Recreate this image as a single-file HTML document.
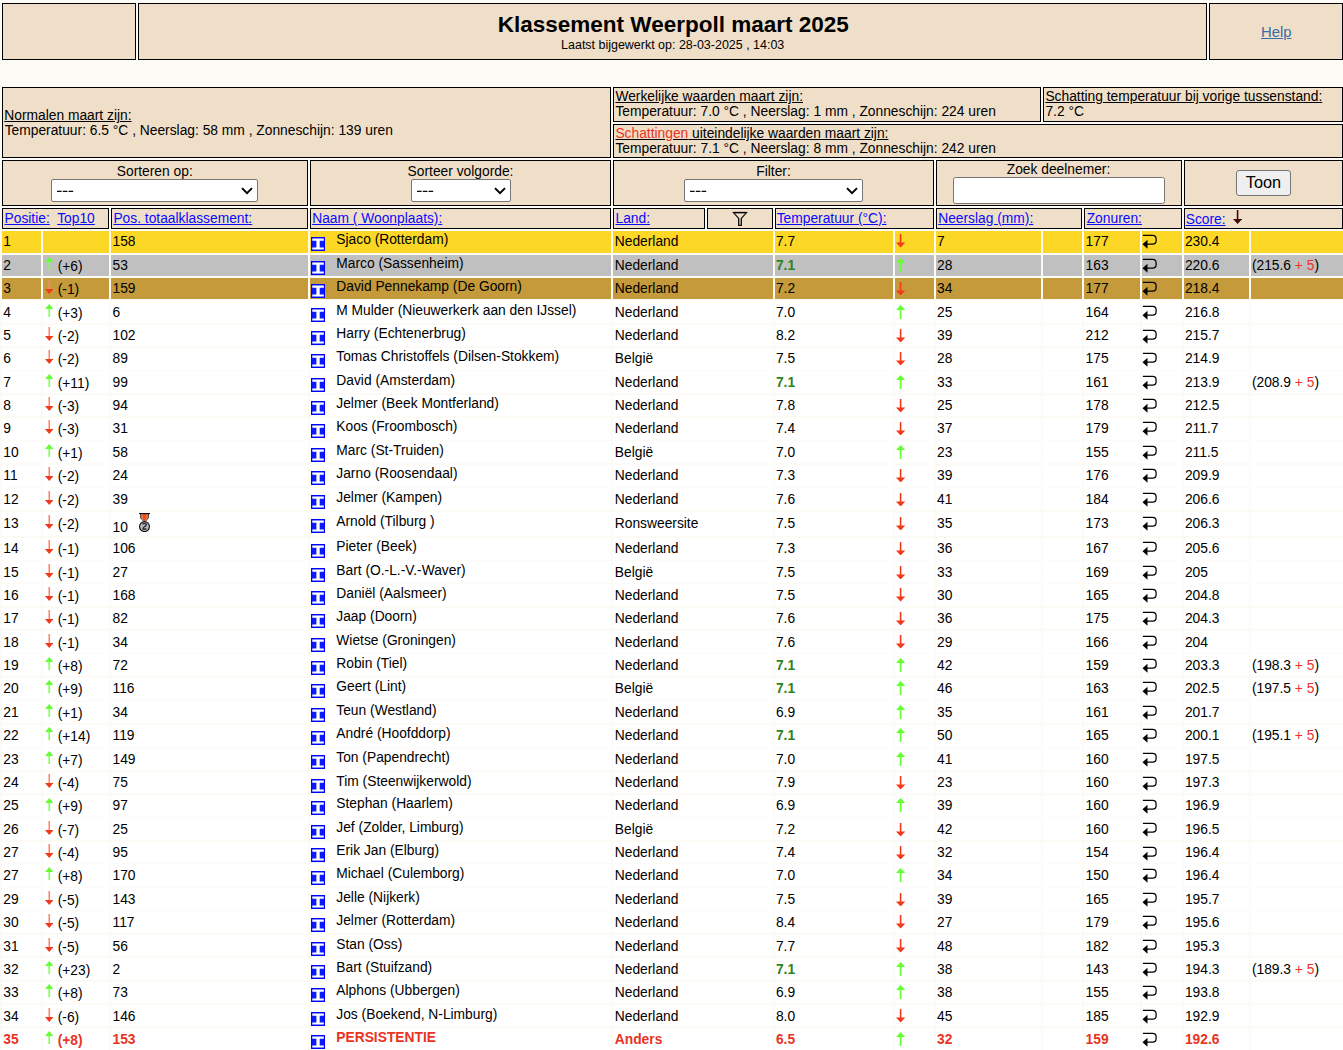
<!DOCTYPE html>
<html><head><meta charset="utf-8"><title>Klassement Weerpoll maart 2025</title>
<style>
html,body{margin:0;padding:0;}
body{width:1343px;height:1050px;overflow:hidden;background:#FDFBF5;font-family:"Liberation Sans",sans-serif;color:#000;position:relative;}
.b{position:absolute;display:block;}
.t{position:absolute;white-space:nowrap;}
.bd{font-weight:bold;}
.rb{font-weight:bold;color:#E8341F;}
.gb{font-weight:bold;color:#2B8420;}
.lk{color:#0A0AFF;text-decoration:underline;}
.sel{position:absolute;box-sizing:border-box;background:#fff;border:1px solid #767676;border-radius:2px;font-size:16.3px;}
.sel span{position:absolute;left:5.5px;top:0.6px;line-height:19px;}
.sel svg.c{position:absolute;right:3.9px;top:6.9px;}
.sel svg.d{position:absolute;left:4.9px;top:9.9px;}
.inp{position:absolute;box-sizing:border-box;background:#fff;border:1px solid #767676;border-radius:2.5px;}
.btn{position:absolute;box-sizing:border-box;background:#EFEFEF;border:1px solid #767676;border-radius:3px;font-size:16.3px;line-height:23px;text-align:center;}
</style></head><body>
<div class="b" style="left:2px;top:3px;width:134.00px;height:57.00px;background:#F0DFC8;border:1px solid #000;box-sizing:border-box;"></div>
<div class="b" style="left:138px;top:3px;width:1069.00px;height:57.00px;background:#F0DFC8;border:1px solid #000;box-sizing:border-box;"></div>
<div class="b" style="left:1209px;top:3px;width:134.00px;height:57.00px;background:#F0DFC8;border:1px solid #000;box-sizing:border-box;"></div>
<div class="t bd" style="left:273.29999999999995px;width:800px;text-align:center;top:11px;font-size:22.5px;line-height:27px;">Klassement Weerpoll maart 2025</div>
<div class="t " style="left:272.70000000000005px;width:800px;text-align:center;top:38px;font-size:12.48px;line-height:15px;">Laatst bijgewerkt op: 28-03-2025 , 14:03</div>
<div class="t " style="left:876.2px;width:800px;text-align:center;top:23px;font-size:14.8px;line-height:18px;"><span style="color:#3A6EA5;text-decoration:underline">Help</span></div>
<div class="b" style="left:2px;top:87px;width:609.20px;height:71.00px;background:#F0DFC8;border:1px solid #000;box-sizing:border-box;"></div>
<div class="b" style="left:613px;top:87px;width:428.00px;height:35.00px;background:#F0DFC8;border:1px solid #000;box-sizing:border-box;"></div>
<div class="b" style="left:1043px;top:87px;width:300.00px;height:35.00px;background:#F0DFC8;border:1px solid #000;box-sizing:border-box;"></div>
<div class="b" style="left:613px;top:124px;width:730.00px;height:34.00px;background:#F0DFC8;border:1px solid #000;box-sizing:border-box;"></div>
<div class="t " style="left:4.3px;top:108px;font-size:13.8px;line-height:16px;"><u>Normalen maart zijn:</u></div>
<div class="t " style="left:4.7px;top:123px;font-size:13.8px;line-height:16px;">Temperatuur: 6.5 °C , Neerslag: 58 mm , Zonneschijn: 139 uren</div>
<div class="t " style="left:615.4px;top:89px;font-size:13.8px;line-height:16px;"><u>Werkelijke waarden maart zijn:</u></div>
<div class="t " style="left:615.4px;top:104px;font-size:13.8px;line-height:16px;">Temperatuur: 7.0 °C , Neerslag: 1 mm , Zonneschijn: 224 uren</div>
<div class="t " style="left:1045.4px;top:89px;font-size:13.8px;line-height:16px;"><u>Schatting temperatuur bij vorige tussenstand:</u></div>
<div class="t " style="left:1045.4px;top:104px;font-size:13.8px;line-height:16px;">7.2 °C</div>
<div class="t " style="left:615.4px;top:126px;font-size:13.8px;line-height:16px;"><u><span style="color:#E8341F">Schattingen</span> uiteindelijke waarden maart zijn:</u></div>
<div class="t " style="left:615.4px;top:141px;font-size:13.8px;line-height:16px;">Temperatuur: 7.1 °C , Neerslag: 8 mm , Zonneschijn: 242 uren</div>
<div class="b" style="left:2px;top:160.1px;width:306.10px;height:45.90px;background:#F0DFC8;border:1px solid #000;box-sizing:border-box;"></div>
<div class="b" style="left:309.7px;top:160.1px;width:301.50px;height:45.90px;background:#F0DFC8;border:1px solid #000;box-sizing:border-box;"></div>
<div class="b" style="left:613px;top:160.1px;width:321.00px;height:45.90px;background:#F0DFC8;border:1px solid #000;box-sizing:border-box;"></div>
<div class="b" style="left:935.7px;top:160.1px;width:246.30px;height:45.90px;background:#F0DFC8;border:1px solid #000;box-sizing:border-box;"></div>
<div class="b" style="left:1184px;top:160.1px;width:159.00px;height:45.90px;background:#F0DFC8;border:1px solid #000;box-sizing:border-box;"></div>
<div class="t " style="left:-245.25px;width:800px;text-align:center;top:164px;font-size:13.8px;line-height:16px;">Sorteren op:</div>
<div class="t " style="left:60.5px;width:800px;text-align:center;top:164px;font-size:13.8px;line-height:16px;">Sorteer volgorde:</div>
<div class="t " style="left:373.5px;width:800px;text-align:center;top:164px;font-size:13.8px;line-height:16px;">Filter:</div>
<div class="t " style="left:658.5px;width:800px;text-align:center;top:162px;font-size:13.8px;line-height:16px;">Zoek deelnemer:</div>
<div class="sel" style="left:51.1px;top:179.1px;width:206.70px;height:22.60px"><svg class="d" width="17" height="3" viewBox="0 0 17 3"><rect x="0" y="0.75" width="4.6" height="1.2"/><rect x="5.8" y="0.75" width="4.6" height="1.2"/><rect x="11.6" y="0.75" width="4.6" height="1.2"/></svg><svg class="c" width="12" height="8" viewBox="0 0 12 8"><path d="M1 1.1 L6 6.1 L11 1.1" fill="none" stroke="#000" stroke-width="2"/></svg></div>
<div class="sel" style="left:411.1px;top:179.1px;width:99.60px;height:22.60px"><svg class="d" width="17" height="3" viewBox="0 0 17 3"><rect x="0" y="0.75" width="4.6" height="1.2"/><rect x="5.8" y="0.75" width="4.6" height="1.2"/><rect x="11.6" y="0.75" width="4.6" height="1.2"/></svg><svg class="c" width="12" height="8" viewBox="0 0 12 8"><path d="M1 1.1 L6 6.1 L11 1.1" fill="none" stroke="#000" stroke-width="2"/></svg></div>
<div class="sel" style="left:684.1px;top:179.1px;width:178.60px;height:22.60px"><svg class="d" width="17" height="3" viewBox="0 0 17 3"><rect x="0" y="0.75" width="4.6" height="1.2"/><rect x="5.8" y="0.75" width="4.6" height="1.2"/><rect x="11.6" y="0.75" width="4.6" height="1.2"/></svg><svg class="c" width="12" height="8" viewBox="0 0 12 8"><path d="M1 1.1 L6 6.1 L11 1.1" fill="none" stroke="#000" stroke-width="2"/></svg></div>
<div class="inp" style="left:953.2px;top:177.1px;width:212px;height:26.6px"></div>
<div class="btn" style="left:1236.2px;top:170.4px;width:54.5px;height:25.2px">Toon</div>
<div class="b" style="left:2px;top:208.0px;width:107.10px;height:21.00px;background:#F0DFC8;border:1px solid #000;box-sizing:border-box;"></div>
<div class="t " style="left:4.5px;top:211px;font-size:13.8px;line-height:16px;"><span class="lk">Positie:</span></div>
<div class="t " style="left:57.2px;top:211px;font-size:13.8px;line-height:16px;"><span class="lk">Top10</span></div>
<div class="b" style="left:110.9px;top:208.0px;width:197.20px;height:21.00px;background:#F0DFC8;border:1px solid #000;box-sizing:border-box;"></div>
<div class="t " style="left:113.4px;top:211px;font-size:13.8px;line-height:16px;"><span class="lk">Pos. totaalklassement:</span></div>
<div class="b" style="left:309.7px;top:208.0px;width:301.50px;height:21.00px;background:#F0DFC8;border:1px solid #000;box-sizing:border-box;"></div>
<div class="t " style="left:312.2px;top:211px;font-size:13.8px;line-height:16px;"><span class="lk">Naam ( Woonplaats):</span></div>
<div class="b" style="left:613px;top:208.0px;width:92.20px;height:21.00px;background:#F0DFC8;border:1px solid #000;box-sizing:border-box;"></div>
<div class="t " style="left:615.5px;top:211px;font-size:13.8px;line-height:16px;"><span class="lk">Land:</span></div>
<div class="b" style="left:707px;top:208.0px;width:66.10px;height:21.00px;background:#F0DFC8;border:1px solid #000;box-sizing:border-box;"></div>
<div class="b" style="left:774.8px;top:208.0px;width:159.20px;height:21.00px;background:#F0DFC8;border:1px solid #000;box-sizing:border-box;"></div>
<div class="t " style="left:776.6999999999999px;top:211px;font-size:13.8px;line-height:16px;"><span class="lk">Temperatuur (°C):</span></div>
<div class="b" style="left:935.7px;top:208.0px;width:146.30px;height:21.00px;background:#F0DFC8;border:1px solid #000;box-sizing:border-box;"></div>
<div class="t " style="left:938.2px;top:211px;font-size:13.8px;line-height:16px;"><span class="lk">Neerslag (mm):</span></div>
<div class="b" style="left:1083.8px;top:208.0px;width:98.20px;height:21.00px;background:#F0DFC8;border:1px solid #000;box-sizing:border-box;"></div>
<div class="t " style="left:1086.7px;top:211px;font-size:13.8px;line-height:16px;"><span class="lk">Zonuren:</span></div>
<div class="b" style="left:1184px;top:208.0px;width:159.00px;height:21.00px;background:#F0DFC8;border:1px solid #000;box-sizing:border-box;"></div>
<div class="t " style="left:1185.7px;top:212px;font-size:13.8px;line-height:16px;"><span class="lk">Score:</span></div>
<svg class="b" style="left:732px;top:211px" width="16" height="16" viewBox="0 0 16 16"><path d="M6.7 7.4 V14.2 H9.3 V7.4 Z" fill="#9a9284" fill-opacity="0.7"/><path d="M1.5 1.6 H14.5 L9.4 7.3 V14.3 H6.6 V7.3 Z" fill="none" stroke="#141414" stroke-width="1.15" stroke-linejoin="miter"/><path d="M1.2 1.5 H14.8" stroke="#000" stroke-width="1.3"/></svg>
<svg class="b" style="left:1233.0px;top:210.10px" width="9.2" height="14" viewBox="0 0 9.2 14" preserveAspectRatio="none"><rect x="3.80" y="0" width="1.6" height="10.00" fill="#420A0A"/><path d="M4.6 14 L9.2 9 L0 9 Z" fill="#420A0A"/></svg>
<div class="b" style="left:2px;top:231.05px;width:39.30px;height:21.65px;background:#FCD726;"></div>
<div class="b" style="left:42.9px;top:231.05px;width:66.30px;height:21.65px;background:#FCD726;"></div>
<div class="b" style="left:110.9px;top:231.05px;width:197.20px;height:21.65px;background:#FCD726;"></div>
<div class="b" style="left:309.7px;top:231.05px;width:301.50px;height:21.65px;background:#FCD726;"></div>
<div class="b" style="left:613px;top:231.05px;width:160.10px;height:21.65px;background:#FCD726;"></div>
<div class="b" style="left:774.8px;top:231.05px;width:118.40px;height:21.65px;background:#FCD726;"></div>
<div class="b" style="left:894.8px;top:231.05px;width:39.30px;height:21.65px;background:#FCD726;"></div>
<div class="b" style="left:935.7px;top:231.05px;width:105.50px;height:21.65px;background:#FCD726;"></div>
<div class="b" style="left:1042.9px;top:231.05px;width:39.10px;height:21.65px;background:#FCD726;"></div>
<div class="b" style="left:1083.8px;top:231.05px;width:56.00px;height:21.65px;background:#FCD726;"></div>
<div class="b" style="left:1141.6px;top:231.05px;width:40.40px;height:21.65px;background:#FCD726;"></div>
<div class="b" style="left:1184px;top:231.05px;width:65.10px;height:21.65px;background:#FCD726;"></div>
<div class="b" style="left:1250.8px;top:231.05px;width:92.20px;height:21.65px;background:#FCD726;"></div>
<div class="t " style="left:3.3px;top:234px;font-size:13.8px;line-height:16px;">1</div>
<div class="t " style="left:112.5px;top:234px;font-size:13.8px;line-height:16px;">158</div>
<svg class="b" style="left:310.9px;top:237.05px" width="14.1" height="14.1" viewBox="0 0 14.1 14.1"><rect width="14.1" height="14.1" fill="#0000FF"/><rect x="1.1" y="1.1" width="11.9" height="11.9" fill="#0A1CFF"/><path d="M1.3 1.5 H12.8 V3.7 H8.7 V10.4 H12.8 V12.6 H1.3 V10.4 H5.4 V3.7 H1.3 Z" fill="#fff"/></svg>
<div class="t " style="left:336.3px;top:232px;font-size:13.8px;line-height:16px;">Sjaco (Rotterdam)</div>
<div class="t " style="left:614.8px;top:234px;font-size:13.8px;line-height:16px;">Nederland</div>
<div class="t " style="left:775.9px;top:234px;font-size:13.8px;line-height:16px;">7.7</div>
<svg class="b" style="left:895.9px;top:234.45px" width="9.2" height="13.5" viewBox="0 0 9.2 13.5" preserveAspectRatio="none"><rect x="3.80" y="0" width="1.6" height="9.50" fill="#F03A1C"/><path d="M4.6 13.5 L9.2 8.5 L0 8.5 Z" fill="#F03A1C"/></svg>
<div class="t " style="left:937.1px;top:234px;font-size:13.8px;line-height:16px;">7</div>
<div class="t " style="left:1085.6px;top:234px;font-size:13.8px;line-height:16px;">177</div>
<svg class="b" style="left:1142.4px;top:234.15px" width="16" height="15" viewBox="0 0 16 15"><path d="M0.9 1.3 H10.6 Q14.1 1.3 14.1 4.7 V6.8 Q14.1 10.2 10.6 10.2 H4.5" fill="none" stroke="#000" stroke-width="1.25"/><path d="M0.5 10.2 L5.5 5.8 V14.7 Z" fill="#000"/></svg>
<div class="t " style="left:1184.9px;top:234px;font-size:13.8px;line-height:16px;">230.4</div>
<div class="b" style="left:2px;top:255.0px;width:39.30px;height:20.65px;background:#C0C0C0;"></div>
<div class="b" style="left:42.9px;top:255.0px;width:66.30px;height:20.65px;background:#C0C0C0;"></div>
<div class="b" style="left:110.9px;top:255.0px;width:197.20px;height:20.65px;background:#C0C0C0;"></div>
<div class="b" style="left:309.7px;top:255.0px;width:301.50px;height:20.65px;background:#C0C0C0;"></div>
<div class="b" style="left:613px;top:255.0px;width:160.10px;height:20.65px;background:#C0C0C0;"></div>
<div class="b" style="left:774.8px;top:255.0px;width:118.40px;height:20.65px;background:#C0C0C0;"></div>
<div class="b" style="left:894.8px;top:255.0px;width:39.30px;height:20.65px;background:#C0C0C0;"></div>
<div class="b" style="left:935.7px;top:255.0px;width:105.50px;height:20.65px;background:#C0C0C0;"></div>
<div class="b" style="left:1042.9px;top:255.0px;width:39.10px;height:20.65px;background:#C0C0C0;"></div>
<div class="b" style="left:1083.8px;top:255.0px;width:56.00px;height:20.65px;background:#C0C0C0;"></div>
<div class="b" style="left:1141.6px;top:255.0px;width:40.40px;height:20.65px;background:#C0C0C0;"></div>
<div class="b" style="left:1184px;top:255.0px;width:65.10px;height:20.65px;background:#C0C0C0;"></div>
<div class="b" style="left:1250.8px;top:255.0px;width:92.20px;height:20.65px;background:#C0C0C0;"></div>
<div class="t " style="left:3.3px;top:258px;font-size:13.8px;line-height:16px;">2</div>
<svg class="b" style="left:44.8px;top:257.15px" width="8.5" height="13.3" viewBox="0 0 8.5 13.3" preserveAspectRatio="none"><rect x="3.40" y="4" width="1.7" height="9.30" fill="#84FF58"/><path d="M4.25 0 L8.5 5 L0 5 Z" fill="#66FF33"/></svg>
<div class="t " style="left:57.7px;top:259px;font-size:13.8px;line-height:16px;">(+6)</div>
<div class="t " style="left:112.5px;top:258px;font-size:13.8px;line-height:16px;">53</div>
<svg class="b" style="left:310.9px;top:261.05px" width="14.1" height="14.1" viewBox="0 0 14.1 14.1"><rect width="14.1" height="14.1" fill="#0000FF"/><rect x="1.1" y="1.1" width="11.9" height="11.9" fill="#0A1CFF"/><path d="M1.3 1.5 H12.8 V3.7 H8.7 V10.4 H12.8 V12.6 H1.3 V10.4 H5.4 V3.7 H1.3 Z" fill="#fff"/></svg>
<div class="t " style="left:336.3px;top:256px;font-size:13.8px;line-height:16px;">Marco (Sassenheim)</div>
<div class="t " style="left:614.8px;top:258px;font-size:13.8px;line-height:16px;">Nederland</div>
<div class="t gb" style="left:775.9px;top:258px;font-size:13.8px;line-height:16px;">7.1</div>
<svg class="b" style="left:895.9px;top:257.95px" width="9.2" height="14.1" viewBox="0 0 9.2 14.1" preserveAspectRatio="none"><rect x="3.75" y="4" width="1.7" height="10.10" fill="#66FF33"/><path d="M4.6 0 L9.2 5 L0 5 Z" fill="#66FF33"/></svg>
<div class="t " style="left:937.1px;top:258px;font-size:13.8px;line-height:16px;">28</div>
<div class="t " style="left:1085.6px;top:258px;font-size:13.8px;line-height:16px;">163</div>
<svg class="b" style="left:1142.4px;top:258.15px" width="16" height="15" viewBox="0 0 16 15"><path d="M0.9 1.3 H10.6 Q14.1 1.3 14.1 4.7 V6.8 Q14.1 10.2 10.6 10.2 H4.5" fill="none" stroke="#000" stroke-width="1.25"/><path d="M0.5 10.2 L5.5 5.8 V14.7 Z" fill="#000"/></svg>
<div class="t " style="left:1184.9px;top:258px;font-size:13.8px;line-height:16px;">220.6</div>
<div class="t " style="left:1251.9px;top:258px;font-size:13.8px;line-height:16px;">(215.6 <span style="color:#EE3030">+ 5</span>)</div>
<div class="b" style="left:2px;top:278.15px;width:39.30px;height:20.55px;background:#C49A3A;"></div>
<div class="b" style="left:42.9px;top:278.15px;width:66.30px;height:20.55px;background:#C49A3A;"></div>
<div class="b" style="left:110.9px;top:278.15px;width:197.20px;height:20.55px;background:#C49A3A;"></div>
<div class="b" style="left:309.7px;top:278.15px;width:301.50px;height:20.55px;background:#C49A3A;"></div>
<div class="b" style="left:613px;top:278.15px;width:160.10px;height:20.55px;background:#C49A3A;"></div>
<div class="b" style="left:774.8px;top:278.15px;width:118.40px;height:20.55px;background:#C49A3A;"></div>
<div class="b" style="left:894.8px;top:278.15px;width:39.30px;height:20.55px;background:#C49A3A;"></div>
<div class="b" style="left:935.7px;top:278.15px;width:105.50px;height:20.55px;background:#C49A3A;"></div>
<div class="b" style="left:1042.9px;top:278.15px;width:39.10px;height:20.55px;background:#C49A3A;"></div>
<div class="b" style="left:1083.8px;top:278.15px;width:56.00px;height:20.55px;background:#C49A3A;"></div>
<div class="b" style="left:1141.6px;top:278.15px;width:40.40px;height:20.55px;background:#C49A3A;"></div>
<div class="b" style="left:1184px;top:278.15px;width:65.10px;height:20.55px;background:#C49A3A;"></div>
<div class="b" style="left:1250.8px;top:278.15px;width:92.20px;height:20.55px;background:#C49A3A;"></div>
<div class="t " style="left:3.3px;top:281px;font-size:13.8px;line-height:16px;">3</div>
<svg class="b" style="left:44.8px;top:279.90px" width="8.5" height="14.0" viewBox="0 0 8.5 14.0" preserveAspectRatio="none"><rect x="3.45" y="0" width="1.6" height="10.00" fill="#FF8470"/><path d="M4.25 14.0 L8.5 9.0 L0 9.0 Z" fill="#F03A1C"/></svg>
<div class="t " style="left:57.7px;top:282px;font-size:13.8px;line-height:16px;">(-1)</div>
<div class="t " style="left:112.5px;top:281px;font-size:13.8px;line-height:16px;">159</div>
<svg class="b" style="left:310.9px;top:284.10px" width="14.1" height="14.1" viewBox="0 0 14.1 14.1"><rect width="14.1" height="14.1" fill="#0000FF"/><rect x="1.1" y="1.1" width="11.9" height="11.9" fill="#0A1CFF"/><path d="M1.3 1.5 H12.8 V3.7 H8.7 V10.4 H12.8 V12.6 H1.3 V10.4 H5.4 V3.7 H1.3 Z" fill="#fff"/></svg>
<div class="t " style="left:336.3px;top:279px;font-size:13.8px;line-height:16px;">David Pennekamp (De Goorn)</div>
<div class="t " style="left:614.8px;top:281px;font-size:13.8px;line-height:16px;">Nederland</div>
<div class="t " style="left:775.9px;top:281px;font-size:13.8px;line-height:16px;">7.2</div>
<svg class="b" style="left:895.9px;top:281.50px" width="9.2" height="13.5" viewBox="0 0 9.2 13.5" preserveAspectRatio="none"><rect x="3.80" y="0" width="1.6" height="9.50" fill="#F03A1C"/><path d="M4.6 13.5 L9.2 8.5 L0 8.5 Z" fill="#F03A1C"/></svg>
<div class="t " style="left:937.1px;top:281px;font-size:13.8px;line-height:16px;">34</div>
<div class="t " style="left:1085.6px;top:281px;font-size:13.8px;line-height:16px;">177</div>
<svg class="b" style="left:1142.4px;top:281.20px" width="16" height="15" viewBox="0 0 16 15"><path d="M0.9 1.3 H10.6 Q14.1 1.3 14.1 4.7 V6.8 Q14.1 10.2 10.6 10.2 H4.5" fill="none" stroke="#000" stroke-width="1.25"/><path d="M0.5 10.2 L5.5 5.8 V14.7 Z" fill="#000"/></svg>
<div class="t " style="left:1184.9px;top:281px;font-size:13.8px;line-height:16px;">218.4</div>
<div class="b" style="left:2px;top:301.1px;width:39.30px;height:21.95px;background:#FFFFFF;"></div>
<div class="b" style="left:42.9px;top:301.1px;width:66.30px;height:21.95px;background:#FFFFFF;"></div>
<div class="b" style="left:110.9px;top:301.1px;width:197.20px;height:21.95px;background:#FFFFFF;"></div>
<div class="b" style="left:309.7px;top:301.1px;width:301.50px;height:21.95px;background:#FFFFFF;"></div>
<div class="b" style="left:613px;top:301.1px;width:160.10px;height:21.95px;background:#FFFFFF;"></div>
<div class="b" style="left:774.8px;top:301.1px;width:118.40px;height:21.95px;background:#FFFFFF;"></div>
<div class="b" style="left:894.8px;top:301.1px;width:39.30px;height:21.95px;background:#FFFFFF;"></div>
<div class="b" style="left:935.7px;top:301.1px;width:105.50px;height:21.95px;background:#FFFFFF;"></div>
<div class="b" style="left:1042.9px;top:301.1px;width:39.10px;height:21.95px;background:#FFFFFF;"></div>
<div class="b" style="left:1083.8px;top:301.1px;width:56.00px;height:21.95px;background:#FFFFFF;"></div>
<div class="b" style="left:1141.6px;top:301.1px;width:40.40px;height:21.95px;background:#FFFFFF;"></div>
<div class="b" style="left:1184px;top:301.1px;width:65.10px;height:21.95px;background:#FFFFFF;"></div>
<div class="b" style="left:1250.8px;top:301.1px;width:92.20px;height:21.95px;background:#FFFFFF;"></div>
<div class="t " style="left:3.3px;top:305px;font-size:13.8px;line-height:16px;">4</div>
<svg class="b" style="left:44.8px;top:303.90px" width="8.5" height="13.3" viewBox="0 0 8.5 13.3" preserveAspectRatio="none"><rect x="3.40" y="4" width="1.7" height="9.30" fill="#84FF58"/><path d="M4.25 0 L8.5 5 L0 5 Z" fill="#66FF33"/></svg>
<div class="t " style="left:57.7px;top:306px;font-size:13.8px;line-height:16px;">(+3)</div>
<div class="t " style="left:112.5px;top:305px;font-size:13.8px;line-height:16px;">6</div>
<svg class="b" style="left:310.9px;top:307.80px" width="14.1" height="14.1" viewBox="0 0 14.1 14.1"><rect width="14.1" height="14.1" fill="#0000FF"/><rect x="1.1" y="1.1" width="11.9" height="11.9" fill="#0A1CFF"/><path d="M1.3 1.5 H12.8 V3.7 H8.7 V10.4 H12.8 V12.6 H1.3 V10.4 H5.4 V3.7 H1.3 Z" fill="#fff"/></svg>
<div class="t " style="left:336.3px;top:303px;font-size:13.8px;line-height:16px;">M Mulder (Nieuwerkerk aan den IJssel)</div>
<div class="t " style="left:614.8px;top:305px;font-size:13.8px;line-height:16px;">Nederland</div>
<div class="t " style="left:775.9px;top:305px;font-size:13.8px;line-height:16px;">7.0</div>
<svg class="b" style="left:895.9px;top:304.70px" width="9.2" height="14.1" viewBox="0 0 9.2 14.1" preserveAspectRatio="none"><rect x="3.75" y="4" width="1.7" height="10.10" fill="#66FF33"/><path d="M4.6 0 L9.2 5 L0 5 Z" fill="#66FF33"/></svg>
<div class="t " style="left:937.1px;top:305px;font-size:13.8px;line-height:16px;">25</div>
<div class="t " style="left:1085.6px;top:305px;font-size:13.8px;line-height:16px;">164</div>
<svg class="b" style="left:1142.4px;top:304.90px" width="16" height="15" viewBox="0 0 16 15"><path d="M0.9 1.3 H10.6 Q14.1 1.3 14.1 4.7 V6.8 Q14.1 10.2 10.6 10.2 H4.5" fill="none" stroke="#000" stroke-width="1.25"/><path d="M0.5 10.2 L5.5 5.8 V14.7 Z" fill="#000"/></svg>
<div class="t " style="left:1184.9px;top:305px;font-size:13.8px;line-height:16px;">216.8</div>
<div class="b" style="left:2px;top:324.75px;width:39.30px;height:21.25px;background:#FFFFFF;"></div>
<div class="b" style="left:42.9px;top:324.75px;width:66.30px;height:21.25px;background:#FFFFFF;"></div>
<div class="b" style="left:110.9px;top:324.75px;width:197.20px;height:21.25px;background:#FFFFFF;"></div>
<div class="b" style="left:309.7px;top:324.75px;width:301.50px;height:21.25px;background:#FFFFFF;"></div>
<div class="b" style="left:613px;top:324.75px;width:160.10px;height:21.25px;background:#FFFFFF;"></div>
<div class="b" style="left:774.8px;top:324.75px;width:118.40px;height:21.25px;background:#FFFFFF;"></div>
<div class="b" style="left:894.8px;top:324.75px;width:39.30px;height:21.25px;background:#FFFFFF;"></div>
<div class="b" style="left:935.7px;top:324.75px;width:105.50px;height:21.25px;background:#FFFFFF;"></div>
<div class="b" style="left:1042.9px;top:324.75px;width:39.10px;height:21.25px;background:#FFFFFF;"></div>
<div class="b" style="left:1083.8px;top:324.75px;width:56.00px;height:21.25px;background:#FFFFFF;"></div>
<div class="b" style="left:1141.6px;top:324.75px;width:40.40px;height:21.25px;background:#FFFFFF;"></div>
<div class="b" style="left:1184px;top:324.75px;width:65.10px;height:21.25px;background:#FFFFFF;"></div>
<div class="b" style="left:1250.8px;top:324.75px;width:92.20px;height:21.25px;background:#FFFFFF;"></div>
<div class="t " style="left:3.3px;top:328px;font-size:13.8px;line-height:16px;">5</div>
<svg class="b" style="left:44.8px;top:327.25px" width="8.5" height="14.0" viewBox="0 0 8.5 14.0" preserveAspectRatio="none"><rect x="3.45" y="0" width="1.6" height="10.00" fill="#FF8470"/><path d="M4.25 14.0 L8.5 9.0 L0 9.0 Z" fill="#F03A1C"/></svg>
<div class="t " style="left:57.7px;top:329px;font-size:13.8px;line-height:16px;">(-2)</div>
<div class="t " style="left:112.5px;top:328px;font-size:13.8px;line-height:16px;">102</div>
<svg class="b" style="left:310.9px;top:331.45px" width="14.1" height="14.1" viewBox="0 0 14.1 14.1"><rect width="14.1" height="14.1" fill="#0000FF"/><rect x="1.1" y="1.1" width="11.9" height="11.9" fill="#0A1CFF"/><path d="M1.3 1.5 H12.8 V3.7 H8.7 V10.4 H12.8 V12.6 H1.3 V10.4 H5.4 V3.7 H1.3 Z" fill="#fff"/></svg>
<div class="t " style="left:336.3px;top:326px;font-size:13.8px;line-height:16px;">Harry (Echtenerbrug)</div>
<div class="t " style="left:614.8px;top:328px;font-size:13.8px;line-height:16px;">Nederland</div>
<div class="t " style="left:775.9px;top:328px;font-size:13.8px;line-height:16px;">8.2</div>
<svg class="b" style="left:895.9px;top:328.85px" width="9.2" height="13.5" viewBox="0 0 9.2 13.5" preserveAspectRatio="none"><rect x="3.80" y="0" width="1.6" height="9.50" fill="#F03A1C"/><path d="M4.6 13.5 L9.2 8.5 L0 8.5 Z" fill="#F03A1C"/></svg>
<div class="t " style="left:937.1px;top:328px;font-size:13.8px;line-height:16px;">39</div>
<div class="t " style="left:1085.6px;top:328px;font-size:13.8px;line-height:16px;">212</div>
<svg class="b" style="left:1142.4px;top:328.55px" width="16" height="15" viewBox="0 0 16 15"><path d="M0.9 1.3 H10.6 Q14.1 1.3 14.1 4.7 V6.8 Q14.1 10.2 10.6 10.2 H4.5" fill="none" stroke="#000" stroke-width="1.25"/><path d="M0.5 10.2 L5.5 5.8 V14.7 Z" fill="#000"/></svg>
<div class="t " style="left:1184.9px;top:328px;font-size:13.8px;line-height:16px;">215.7</div>
<div class="b" style="left:2px;top:347.7px;width:39.30px;height:21.90px;background:#FFFFFF;"></div>
<div class="b" style="left:42.9px;top:347.7px;width:66.30px;height:21.90px;background:#FFFFFF;"></div>
<div class="b" style="left:110.9px;top:347.7px;width:197.20px;height:21.90px;background:#FFFFFF;"></div>
<div class="b" style="left:309.7px;top:347.7px;width:301.50px;height:21.90px;background:#FFFFFF;"></div>
<div class="b" style="left:613px;top:347.7px;width:160.10px;height:21.90px;background:#FFFFFF;"></div>
<div class="b" style="left:774.8px;top:347.7px;width:118.40px;height:21.90px;background:#FFFFFF;"></div>
<div class="b" style="left:894.8px;top:347.7px;width:39.30px;height:21.90px;background:#FFFFFF;"></div>
<div class="b" style="left:935.7px;top:347.7px;width:105.50px;height:21.90px;background:#FFFFFF;"></div>
<div class="b" style="left:1042.9px;top:347.7px;width:39.10px;height:21.90px;background:#FFFFFF;"></div>
<div class="b" style="left:1083.8px;top:347.7px;width:56.00px;height:21.90px;background:#FFFFFF;"></div>
<div class="b" style="left:1141.6px;top:347.7px;width:40.40px;height:21.90px;background:#FFFFFF;"></div>
<div class="b" style="left:1184px;top:347.7px;width:65.10px;height:21.90px;background:#FFFFFF;"></div>
<div class="b" style="left:1250.8px;top:347.7px;width:92.20px;height:21.90px;background:#FFFFFF;"></div>
<div class="t " style="left:3.3px;top:351px;font-size:13.8px;line-height:16px;">6</div>
<svg class="b" style="left:44.8px;top:350.20px" width="8.5" height="14.0" viewBox="0 0 8.5 14.0" preserveAspectRatio="none"><rect x="3.45" y="0" width="1.6" height="10.00" fill="#FF8470"/><path d="M4.25 14.0 L8.5 9.0 L0 9.0 Z" fill="#F03A1C"/></svg>
<div class="t " style="left:57.7px;top:352px;font-size:13.8px;line-height:16px;">(-2)</div>
<div class="t " style="left:112.5px;top:351px;font-size:13.8px;line-height:16px;">89</div>
<svg class="b" style="left:310.9px;top:354.40px" width="14.1" height="14.1" viewBox="0 0 14.1 14.1"><rect width="14.1" height="14.1" fill="#0000FF"/><rect x="1.1" y="1.1" width="11.9" height="11.9" fill="#0A1CFF"/><path d="M1.3 1.5 H12.8 V3.7 H8.7 V10.4 H12.8 V12.6 H1.3 V10.4 H5.4 V3.7 H1.3 Z" fill="#fff"/></svg>
<div class="t " style="left:336.3px;top:349px;font-size:13.8px;line-height:16px;">Tomas Christoffels (Dilsen-Stokkem)</div>
<div class="t " style="left:614.8px;top:351px;font-size:13.8px;line-height:16px;">België</div>
<div class="t " style="left:775.9px;top:351px;font-size:13.8px;line-height:16px;">7.5</div>
<svg class="b" style="left:895.9px;top:351.80px" width="9.2" height="13.5" viewBox="0 0 9.2 13.5" preserveAspectRatio="none"><rect x="3.80" y="0" width="1.6" height="9.50" fill="#F03A1C"/><path d="M4.6 13.5 L9.2 8.5 L0 8.5 Z" fill="#F03A1C"/></svg>
<div class="t " style="left:937.1px;top:351px;font-size:13.8px;line-height:16px;">28</div>
<div class="t " style="left:1085.6px;top:351px;font-size:13.8px;line-height:16px;">175</div>
<svg class="b" style="left:1142.4px;top:351.50px" width="16" height="15" viewBox="0 0 16 15"><path d="M0.9 1.3 H10.6 Q14.1 1.3 14.1 4.7 V6.8 Q14.1 10.2 10.6 10.2 H4.5" fill="none" stroke="#000" stroke-width="1.25"/><path d="M0.5 10.2 L5.5 5.8 V14.7 Z" fill="#000"/></svg>
<div class="t " style="left:1184.9px;top:351px;font-size:13.8px;line-height:16px;">214.9</div>
<div class="b" style="left:2px;top:371.3px;width:39.30px;height:21.60px;background:#FFFFFF;"></div>
<div class="b" style="left:42.9px;top:371.3px;width:66.30px;height:21.60px;background:#FFFFFF;"></div>
<div class="b" style="left:110.9px;top:371.3px;width:197.20px;height:21.60px;background:#FFFFFF;"></div>
<div class="b" style="left:309.7px;top:371.3px;width:301.50px;height:21.60px;background:#FFFFFF;"></div>
<div class="b" style="left:613px;top:371.3px;width:160.10px;height:21.60px;background:#FFFFFF;"></div>
<div class="b" style="left:774.8px;top:371.3px;width:118.40px;height:21.60px;background:#FFFFFF;"></div>
<div class="b" style="left:894.8px;top:371.3px;width:39.30px;height:21.60px;background:#FFFFFF;"></div>
<div class="b" style="left:935.7px;top:371.3px;width:105.50px;height:21.60px;background:#FFFFFF;"></div>
<div class="b" style="left:1042.9px;top:371.3px;width:39.10px;height:21.60px;background:#FFFFFF;"></div>
<div class="b" style="left:1083.8px;top:371.3px;width:56.00px;height:21.60px;background:#FFFFFF;"></div>
<div class="b" style="left:1141.6px;top:371.3px;width:40.40px;height:21.60px;background:#FFFFFF;"></div>
<div class="b" style="left:1184px;top:371.3px;width:65.10px;height:21.60px;background:#FFFFFF;"></div>
<div class="b" style="left:1250.8px;top:371.3px;width:92.20px;height:21.60px;background:#FFFFFF;"></div>
<div class="t " style="left:3.3px;top:375px;font-size:13.8px;line-height:16px;">7</div>
<svg class="b" style="left:44.8px;top:374.10px" width="8.5" height="13.3" viewBox="0 0 8.5 13.3" preserveAspectRatio="none"><rect x="3.40" y="4" width="1.7" height="9.30" fill="#84FF58"/><path d="M4.25 0 L8.5 5 L0 5 Z" fill="#66FF33"/></svg>
<div class="t " style="left:57.7px;top:376px;font-size:13.8px;line-height:16px;">(+11)</div>
<div class="t " style="left:112.5px;top:375px;font-size:13.8px;line-height:16px;">99</div>
<svg class="b" style="left:310.9px;top:378.00px" width="14.1" height="14.1" viewBox="0 0 14.1 14.1"><rect width="14.1" height="14.1" fill="#0000FF"/><rect x="1.1" y="1.1" width="11.9" height="11.9" fill="#0A1CFF"/><path d="M1.3 1.5 H12.8 V3.7 H8.7 V10.4 H12.8 V12.6 H1.3 V10.4 H5.4 V3.7 H1.3 Z" fill="#fff"/></svg>
<div class="t " style="left:336.3px;top:373px;font-size:13.8px;line-height:16px;">David (Amsterdam)</div>
<div class="t " style="left:614.8px;top:375px;font-size:13.8px;line-height:16px;">Nederland</div>
<div class="t gb" style="left:775.9px;top:375px;font-size:13.8px;line-height:16px;">7.1</div>
<svg class="b" style="left:895.9px;top:374.90px" width="9.2" height="14.1" viewBox="0 0 9.2 14.1" preserveAspectRatio="none"><rect x="3.75" y="4" width="1.7" height="10.10" fill="#66FF33"/><path d="M4.6 0 L9.2 5 L0 5 Z" fill="#66FF33"/></svg>
<div class="t " style="left:937.1px;top:375px;font-size:13.8px;line-height:16px;">33</div>
<div class="t " style="left:1085.6px;top:375px;font-size:13.8px;line-height:16px;">161</div>
<svg class="b" style="left:1142.4px;top:375.10px" width="16" height="15" viewBox="0 0 16 15"><path d="M0.9 1.3 H10.6 Q14.1 1.3 14.1 4.7 V6.8 Q14.1 10.2 10.6 10.2 H4.5" fill="none" stroke="#000" stroke-width="1.25"/><path d="M0.5 10.2 L5.5 5.8 V14.7 Z" fill="#000"/></svg>
<div class="t " style="left:1184.9px;top:375px;font-size:13.8px;line-height:16px;">213.9</div>
<div class="t " style="left:1251.9px;top:375px;font-size:13.8px;line-height:16px;">(208.9 <span style="color:#EE3030">+ 5</span>)</div>
<div class="b" style="left:2px;top:394.6px;width:39.30px;height:21.25px;background:#FFFFFF;"></div>
<div class="b" style="left:42.9px;top:394.6px;width:66.30px;height:21.25px;background:#FFFFFF;"></div>
<div class="b" style="left:110.9px;top:394.6px;width:197.20px;height:21.25px;background:#FFFFFF;"></div>
<div class="b" style="left:309.7px;top:394.6px;width:301.50px;height:21.25px;background:#FFFFFF;"></div>
<div class="b" style="left:613px;top:394.6px;width:160.10px;height:21.25px;background:#FFFFFF;"></div>
<div class="b" style="left:774.8px;top:394.6px;width:118.40px;height:21.25px;background:#FFFFFF;"></div>
<div class="b" style="left:894.8px;top:394.6px;width:39.30px;height:21.25px;background:#FFFFFF;"></div>
<div class="b" style="left:935.7px;top:394.6px;width:105.50px;height:21.25px;background:#FFFFFF;"></div>
<div class="b" style="left:1042.9px;top:394.6px;width:39.10px;height:21.25px;background:#FFFFFF;"></div>
<div class="b" style="left:1083.8px;top:394.6px;width:56.00px;height:21.25px;background:#FFFFFF;"></div>
<div class="b" style="left:1141.6px;top:394.6px;width:40.40px;height:21.25px;background:#FFFFFF;"></div>
<div class="b" style="left:1184px;top:394.6px;width:65.10px;height:21.25px;background:#FFFFFF;"></div>
<div class="b" style="left:1250.8px;top:394.6px;width:92.20px;height:21.25px;background:#FFFFFF;"></div>
<div class="t " style="left:3.3px;top:398px;font-size:13.8px;line-height:16px;">8</div>
<svg class="b" style="left:44.8px;top:397.10px" width="8.5" height="14.0" viewBox="0 0 8.5 14.0" preserveAspectRatio="none"><rect x="3.45" y="0" width="1.6" height="10.00" fill="#FF8470"/><path d="M4.25 14.0 L8.5 9.0 L0 9.0 Z" fill="#F03A1C"/></svg>
<div class="t " style="left:57.7px;top:399px;font-size:13.8px;line-height:16px;">(-3)</div>
<div class="t " style="left:112.5px;top:398px;font-size:13.8px;line-height:16px;">94</div>
<svg class="b" style="left:310.9px;top:401.30px" width="14.1" height="14.1" viewBox="0 0 14.1 14.1"><rect width="14.1" height="14.1" fill="#0000FF"/><rect x="1.1" y="1.1" width="11.9" height="11.9" fill="#0A1CFF"/><path d="M1.3 1.5 H12.8 V3.7 H8.7 V10.4 H12.8 V12.6 H1.3 V10.4 H5.4 V3.7 H1.3 Z" fill="#fff"/></svg>
<div class="t " style="left:336.3px;top:396px;font-size:13.8px;line-height:16px;">Jelmer (Beek Montferland)</div>
<div class="t " style="left:614.8px;top:398px;font-size:13.8px;line-height:16px;">Nederland</div>
<div class="t " style="left:775.9px;top:398px;font-size:13.8px;line-height:16px;">7.8</div>
<svg class="b" style="left:895.9px;top:398.70px" width="9.2" height="13.5" viewBox="0 0 9.2 13.5" preserveAspectRatio="none"><rect x="3.80" y="0" width="1.6" height="9.50" fill="#F03A1C"/><path d="M4.6 13.5 L9.2 8.5 L0 8.5 Z" fill="#F03A1C"/></svg>
<div class="t " style="left:937.1px;top:398px;font-size:13.8px;line-height:16px;">25</div>
<div class="t " style="left:1085.6px;top:398px;font-size:13.8px;line-height:16px;">178</div>
<svg class="b" style="left:1142.4px;top:398.40px" width="16" height="15" viewBox="0 0 16 15"><path d="M0.9 1.3 H10.6 Q14.1 1.3 14.1 4.7 V6.8 Q14.1 10.2 10.6 10.2 H4.5" fill="none" stroke="#000" stroke-width="1.25"/><path d="M0.5 10.2 L5.5 5.8 V14.7 Z" fill="#000"/></svg>
<div class="t " style="left:1184.9px;top:398px;font-size:13.8px;line-height:16px;">212.5</div>
<div class="b" style="left:2px;top:417.55px;width:39.30px;height:22.12px;background:#FFFFFF;"></div>
<div class="b" style="left:42.9px;top:417.55px;width:66.30px;height:22.12px;background:#FFFFFF;"></div>
<div class="b" style="left:110.9px;top:417.55px;width:197.20px;height:22.12px;background:#FFFFFF;"></div>
<div class="b" style="left:309.7px;top:417.55px;width:301.50px;height:22.12px;background:#FFFFFF;"></div>
<div class="b" style="left:613px;top:417.55px;width:160.10px;height:22.12px;background:#FFFFFF;"></div>
<div class="b" style="left:774.8px;top:417.55px;width:118.40px;height:22.12px;background:#FFFFFF;"></div>
<div class="b" style="left:894.8px;top:417.55px;width:39.30px;height:22.12px;background:#FFFFFF;"></div>
<div class="b" style="left:935.7px;top:417.55px;width:105.50px;height:22.12px;background:#FFFFFF;"></div>
<div class="b" style="left:1042.9px;top:417.55px;width:39.10px;height:22.12px;background:#FFFFFF;"></div>
<div class="b" style="left:1083.8px;top:417.55px;width:56.00px;height:22.12px;background:#FFFFFF;"></div>
<div class="b" style="left:1141.6px;top:417.55px;width:40.40px;height:22.12px;background:#FFFFFF;"></div>
<div class="b" style="left:1184px;top:417.55px;width:65.10px;height:22.12px;background:#FFFFFF;"></div>
<div class="b" style="left:1250.8px;top:417.55px;width:92.20px;height:22.12px;background:#FFFFFF;"></div>
<div class="t " style="left:3.3px;top:421px;font-size:13.8px;line-height:16px;">9</div>
<svg class="b" style="left:44.8px;top:420.05px" width="8.5" height="14.0" viewBox="0 0 8.5 14.0" preserveAspectRatio="none"><rect x="3.45" y="0" width="1.6" height="10.00" fill="#FF8470"/><path d="M4.25 14.0 L8.5 9.0 L0 9.0 Z" fill="#F03A1C"/></svg>
<div class="t " style="left:57.7px;top:422px;font-size:13.8px;line-height:16px;">(-3)</div>
<div class="t " style="left:112.5px;top:421px;font-size:13.8px;line-height:16px;">31</div>
<svg class="b" style="left:310.9px;top:424.25px" width="14.1" height="14.1" viewBox="0 0 14.1 14.1"><rect width="14.1" height="14.1" fill="#0000FF"/><rect x="1.1" y="1.1" width="11.9" height="11.9" fill="#0A1CFF"/><path d="M1.3 1.5 H12.8 V3.7 H8.7 V10.4 H12.8 V12.6 H1.3 V10.4 H5.4 V3.7 H1.3 Z" fill="#fff"/></svg>
<div class="t " style="left:336.3px;top:419px;font-size:13.8px;line-height:16px;">Koos (Froombosch)</div>
<div class="t " style="left:614.8px;top:421px;font-size:13.8px;line-height:16px;">Nederland</div>
<div class="t " style="left:775.9px;top:421px;font-size:13.8px;line-height:16px;">7.4</div>
<svg class="b" style="left:895.9px;top:421.65px" width="9.2" height="13.5" viewBox="0 0 9.2 13.5" preserveAspectRatio="none"><rect x="3.80" y="0" width="1.6" height="9.50" fill="#F03A1C"/><path d="M4.6 13.5 L9.2 8.5 L0 8.5 Z" fill="#F03A1C"/></svg>
<div class="t " style="left:937.1px;top:421px;font-size:13.8px;line-height:16px;">37</div>
<div class="t " style="left:1085.6px;top:421px;font-size:13.8px;line-height:16px;">179</div>
<svg class="b" style="left:1142.4px;top:421.35px" width="16" height="15" viewBox="0 0 16 15"><path d="M0.9 1.3 H10.6 Q14.1 1.3 14.1 4.7 V6.8 Q14.1 10.2 10.6 10.2 H4.5" fill="none" stroke="#000" stroke-width="1.25"/><path d="M0.5 10.2 L5.5 5.8 V14.7 Z" fill="#000"/></svg>
<div class="t " style="left:1184.9px;top:421px;font-size:13.8px;line-height:16px;">211.7</div>
<div class="b" style="left:2px;top:441.37px;width:39.30px;height:21.58px;background:#FFFFFF;"></div>
<div class="b" style="left:42.9px;top:441.37px;width:66.30px;height:21.58px;background:#FFFFFF;"></div>
<div class="b" style="left:110.9px;top:441.37px;width:197.20px;height:21.58px;background:#FFFFFF;"></div>
<div class="b" style="left:309.7px;top:441.37px;width:301.50px;height:21.58px;background:#FFFFFF;"></div>
<div class="b" style="left:613px;top:441.37px;width:160.10px;height:21.58px;background:#FFFFFF;"></div>
<div class="b" style="left:774.8px;top:441.37px;width:118.40px;height:21.58px;background:#FFFFFF;"></div>
<div class="b" style="left:894.8px;top:441.37px;width:39.30px;height:21.58px;background:#FFFFFF;"></div>
<div class="b" style="left:935.7px;top:441.37px;width:105.50px;height:21.58px;background:#FFFFFF;"></div>
<div class="b" style="left:1042.9px;top:441.37px;width:39.10px;height:21.58px;background:#FFFFFF;"></div>
<div class="b" style="left:1083.8px;top:441.37px;width:56.00px;height:21.58px;background:#FFFFFF;"></div>
<div class="b" style="left:1141.6px;top:441.37px;width:40.40px;height:21.58px;background:#FFFFFF;"></div>
<div class="b" style="left:1184px;top:441.37px;width:65.10px;height:21.58px;background:#FFFFFF;"></div>
<div class="b" style="left:1250.8px;top:441.37px;width:92.20px;height:21.58px;background:#FFFFFF;"></div>
<div class="t " style="left:3.3px;top:445px;font-size:13.8px;line-height:16px;">10</div>
<svg class="b" style="left:44.8px;top:444.17px" width="8.5" height="13.3" viewBox="0 0 8.5 13.3" preserveAspectRatio="none"><rect x="3.40" y="4" width="1.7" height="9.30" fill="#84FF58"/><path d="M4.25 0 L8.5 5 L0 5 Z" fill="#66FF33"/></svg>
<div class="t " style="left:57.7px;top:446px;font-size:13.8px;line-height:16px;">(+1)</div>
<div class="t " style="left:112.5px;top:445px;font-size:13.8px;line-height:16px;">58</div>
<svg class="b" style="left:310.9px;top:448.07px" width="14.1" height="14.1" viewBox="0 0 14.1 14.1"><rect width="14.1" height="14.1" fill="#0000FF"/><rect x="1.1" y="1.1" width="11.9" height="11.9" fill="#0A1CFF"/><path d="M1.3 1.5 H12.8 V3.7 H8.7 V10.4 H12.8 V12.6 H1.3 V10.4 H5.4 V3.7 H1.3 Z" fill="#fff"/></svg>
<div class="t " style="left:336.3px;top:443px;font-size:13.8px;line-height:16px;">Marc (St-Truiden)</div>
<div class="t " style="left:614.8px;top:445px;font-size:13.8px;line-height:16px;">België</div>
<div class="t " style="left:775.9px;top:445px;font-size:13.8px;line-height:16px;">7.0</div>
<svg class="b" style="left:895.9px;top:444.97px" width="9.2" height="14.1" viewBox="0 0 9.2 14.1" preserveAspectRatio="none"><rect x="3.75" y="4" width="1.7" height="10.10" fill="#66FF33"/><path d="M4.6 0 L9.2 5 L0 5 Z" fill="#66FF33"/></svg>
<div class="t " style="left:937.1px;top:445px;font-size:13.8px;line-height:16px;">23</div>
<div class="t " style="left:1085.6px;top:445px;font-size:13.8px;line-height:16px;">155</div>
<svg class="b" style="left:1142.4px;top:445.17px" width="16" height="15" viewBox="0 0 16 15"><path d="M0.9 1.3 H10.6 Q14.1 1.3 14.1 4.7 V6.8 Q14.1 10.2 10.6 10.2 H4.5" fill="none" stroke="#000" stroke-width="1.25"/><path d="M0.5 10.2 L5.5 5.8 V14.7 Z" fill="#000"/></svg>
<div class="t " style="left:1184.9px;top:445px;font-size:13.8px;line-height:16px;">211.5</div>
<div class="b" style="left:2px;top:464.65000000000003px;width:39.30px;height:22.13px;background:#FFFFFF;"></div>
<div class="b" style="left:42.9px;top:464.65000000000003px;width:66.30px;height:22.13px;background:#FFFFFF;"></div>
<div class="b" style="left:110.9px;top:464.65000000000003px;width:197.20px;height:22.13px;background:#FFFFFF;"></div>
<div class="b" style="left:309.7px;top:464.65000000000003px;width:301.50px;height:22.13px;background:#FFFFFF;"></div>
<div class="b" style="left:613px;top:464.65000000000003px;width:160.10px;height:22.13px;background:#FFFFFF;"></div>
<div class="b" style="left:774.8px;top:464.65000000000003px;width:118.40px;height:22.13px;background:#FFFFFF;"></div>
<div class="b" style="left:894.8px;top:464.65000000000003px;width:39.30px;height:22.13px;background:#FFFFFF;"></div>
<div class="b" style="left:935.7px;top:464.65000000000003px;width:105.50px;height:22.13px;background:#FFFFFF;"></div>
<div class="b" style="left:1042.9px;top:464.65000000000003px;width:39.10px;height:22.13px;background:#FFFFFF;"></div>
<div class="b" style="left:1083.8px;top:464.65000000000003px;width:56.00px;height:22.13px;background:#FFFFFF;"></div>
<div class="b" style="left:1141.6px;top:464.65000000000003px;width:40.40px;height:22.13px;background:#FFFFFF;"></div>
<div class="b" style="left:1184px;top:464.65000000000003px;width:65.10px;height:22.13px;background:#FFFFFF;"></div>
<div class="b" style="left:1250.8px;top:464.65000000000003px;width:92.20px;height:22.13px;background:#FFFFFF;"></div>
<div class="t " style="left:3.3px;top:468px;font-size:13.8px;line-height:16px;">11</div>
<svg class="b" style="left:44.8px;top:467.15px" width="8.5" height="14.0" viewBox="0 0 8.5 14.0" preserveAspectRatio="none"><rect x="3.45" y="0" width="1.6" height="10.00" fill="#FF8470"/><path d="M4.25 14.0 L8.5 9.0 L0 9.0 Z" fill="#F03A1C"/></svg>
<div class="t " style="left:57.7px;top:469px;font-size:13.8px;line-height:16px;">(-2)</div>
<div class="t " style="left:112.5px;top:468px;font-size:13.8px;line-height:16px;">24</div>
<svg class="b" style="left:310.9px;top:471.35px" width="14.1" height="14.1" viewBox="0 0 14.1 14.1"><rect width="14.1" height="14.1" fill="#0000FF"/><rect x="1.1" y="1.1" width="11.9" height="11.9" fill="#0A1CFF"/><path d="M1.3 1.5 H12.8 V3.7 H8.7 V10.4 H12.8 V12.6 H1.3 V10.4 H5.4 V3.7 H1.3 Z" fill="#fff"/></svg>
<div class="t " style="left:336.3px;top:466px;font-size:13.8px;line-height:16px;">Jarno (Roosendaal)</div>
<div class="t " style="left:614.8px;top:468px;font-size:13.8px;line-height:16px;">Nederland</div>
<div class="t " style="left:775.9px;top:468px;font-size:13.8px;line-height:16px;">7.3</div>
<svg class="b" style="left:895.9px;top:468.75px" width="9.2" height="13.5" viewBox="0 0 9.2 13.5" preserveAspectRatio="none"><rect x="3.80" y="0" width="1.6" height="9.50" fill="#F03A1C"/><path d="M4.6 13.5 L9.2 8.5 L0 8.5 Z" fill="#F03A1C"/></svg>
<div class="t " style="left:937.1px;top:468px;font-size:13.8px;line-height:16px;">39</div>
<div class="t " style="left:1085.6px;top:468px;font-size:13.8px;line-height:16px;">176</div>
<svg class="b" style="left:1142.4px;top:468.45px" width="16" height="15" viewBox="0 0 16 15"><path d="M0.9 1.3 H10.6 Q14.1 1.3 14.1 4.7 V6.8 Q14.1 10.2 10.6 10.2 H4.5" fill="none" stroke="#000" stroke-width="1.25"/><path d="M0.5 10.2 L5.5 5.8 V14.7 Z" fill="#000"/></svg>
<div class="t " style="left:1184.9px;top:468px;font-size:13.8px;line-height:16px;">209.9</div>
<div class="b" style="left:2px;top:488.48px;width:39.30px;height:21.42px;background:#FFFFFF;"></div>
<div class="b" style="left:42.9px;top:488.48px;width:66.30px;height:21.42px;background:#FFFFFF;"></div>
<div class="b" style="left:110.9px;top:488.48px;width:197.20px;height:21.42px;background:#FFFFFF;"></div>
<div class="b" style="left:309.7px;top:488.48px;width:301.50px;height:21.42px;background:#FFFFFF;"></div>
<div class="b" style="left:613px;top:488.48px;width:160.10px;height:21.42px;background:#FFFFFF;"></div>
<div class="b" style="left:774.8px;top:488.48px;width:118.40px;height:21.42px;background:#FFFFFF;"></div>
<div class="b" style="left:894.8px;top:488.48px;width:39.30px;height:21.42px;background:#FFFFFF;"></div>
<div class="b" style="left:935.7px;top:488.48px;width:105.50px;height:21.42px;background:#FFFFFF;"></div>
<div class="b" style="left:1042.9px;top:488.48px;width:39.10px;height:21.42px;background:#FFFFFF;"></div>
<div class="b" style="left:1083.8px;top:488.48px;width:56.00px;height:21.42px;background:#FFFFFF;"></div>
<div class="b" style="left:1141.6px;top:488.48px;width:40.40px;height:21.42px;background:#FFFFFF;"></div>
<div class="b" style="left:1184px;top:488.48px;width:65.10px;height:21.42px;background:#FFFFFF;"></div>
<div class="b" style="left:1250.8px;top:488.48px;width:92.20px;height:21.42px;background:#FFFFFF;"></div>
<div class="t " style="left:3.3px;top:492px;font-size:13.8px;line-height:16px;">12</div>
<svg class="b" style="left:44.8px;top:490.98px" width="8.5" height="14.0" viewBox="0 0 8.5 14.0" preserveAspectRatio="none"><rect x="3.45" y="0" width="1.6" height="10.00" fill="#FF8470"/><path d="M4.25 14.0 L8.5 9.0 L0 9.0 Z" fill="#F03A1C"/></svg>
<div class="t " style="left:57.7px;top:493px;font-size:13.8px;line-height:16px;">(-2)</div>
<div class="t " style="left:112.5px;top:492px;font-size:13.8px;line-height:16px;">39</div>
<svg class="b" style="left:310.9px;top:495.18px" width="14.1" height="14.1" viewBox="0 0 14.1 14.1"><rect width="14.1" height="14.1" fill="#0000FF"/><rect x="1.1" y="1.1" width="11.9" height="11.9" fill="#0A1CFF"/><path d="M1.3 1.5 H12.8 V3.7 H8.7 V10.4 H12.8 V12.6 H1.3 V10.4 H5.4 V3.7 H1.3 Z" fill="#fff"/></svg>
<div class="t " style="left:336.3px;top:490px;font-size:13.8px;line-height:16px;">Jelmer (Kampen)</div>
<div class="t " style="left:614.8px;top:492px;font-size:13.8px;line-height:16px;">Nederland</div>
<div class="t " style="left:775.9px;top:492px;font-size:13.8px;line-height:16px;">7.6</div>
<svg class="b" style="left:895.9px;top:492.58px" width="9.2" height="13.5" viewBox="0 0 9.2 13.5" preserveAspectRatio="none"><rect x="3.80" y="0" width="1.6" height="9.50" fill="#F03A1C"/><path d="M4.6 13.5 L9.2 8.5 L0 8.5 Z" fill="#F03A1C"/></svg>
<div class="t " style="left:937.1px;top:492px;font-size:13.8px;line-height:16px;">41</div>
<div class="t " style="left:1085.6px;top:492px;font-size:13.8px;line-height:16px;">184</div>
<svg class="b" style="left:1142.4px;top:492.28px" width="16" height="15" viewBox="0 0 16 15"><path d="M0.9 1.3 H10.6 Q14.1 1.3 14.1 4.7 V6.8 Q14.1 10.2 10.6 10.2 H4.5" fill="none" stroke="#000" stroke-width="1.25"/><path d="M0.5 10.2 L5.5 5.8 V14.7 Z" fill="#000"/></svg>
<div class="t " style="left:1184.9px;top:492px;font-size:13.8px;line-height:16px;">206.6</div>
<div class="b" style="left:2px;top:511.7px;width:39.30px;height:24.60px;background:#FFFFFF;"></div>
<div class="b" style="left:42.9px;top:511.7px;width:66.30px;height:24.60px;background:#FFFFFF;"></div>
<div class="b" style="left:110.9px;top:511.7px;width:197.20px;height:24.60px;background:#FFFFFF;"></div>
<div class="b" style="left:309.7px;top:511.7px;width:301.50px;height:24.60px;background:#FFFFFF;"></div>
<div class="b" style="left:613px;top:511.7px;width:160.10px;height:24.60px;background:#FFFFFF;"></div>
<div class="b" style="left:774.8px;top:511.7px;width:118.40px;height:24.60px;background:#FFFFFF;"></div>
<div class="b" style="left:894.8px;top:511.7px;width:39.30px;height:24.60px;background:#FFFFFF;"></div>
<div class="b" style="left:935.7px;top:511.7px;width:105.50px;height:24.60px;background:#FFFFFF;"></div>
<div class="b" style="left:1042.9px;top:511.7px;width:39.10px;height:24.60px;background:#FFFFFF;"></div>
<div class="b" style="left:1083.8px;top:511.7px;width:56.00px;height:24.60px;background:#FFFFFF;"></div>
<div class="b" style="left:1141.6px;top:511.7px;width:40.40px;height:24.60px;background:#FFFFFF;"></div>
<div class="b" style="left:1184px;top:511.7px;width:65.10px;height:24.60px;background:#FFFFFF;"></div>
<div class="b" style="left:1250.8px;top:511.7px;width:92.20px;height:24.60px;background:#FFFFFF;"></div>
<div class="t " style="left:3.3px;top:516px;font-size:13.8px;line-height:16px;">13</div>
<svg class="b" style="left:44.8px;top:514.98px" width="8.5" height="14.0" viewBox="0 0 8.5 14.0" preserveAspectRatio="none"><rect x="3.45" y="0" width="1.6" height="10.00" fill="#FF8470"/><path d="M4.25 14.0 L8.5 9.0 L0 9.0 Z" fill="#F03A1C"/></svg>
<div class="t " style="left:57.7px;top:517px;font-size:13.8px;line-height:16px;">(-2)</div>
<div class="t " style="left:112.5px;top:520px;font-size:13.8px;line-height:16px;">10</div>
<svg class="b" style="left:310.9px;top:519.18px" width="14.1" height="14.1" viewBox="0 0 14.1 14.1"><rect width="14.1" height="14.1" fill="#0000FF"/><rect x="1.1" y="1.1" width="11.9" height="11.9" fill="#0A1CFF"/><path d="M1.3 1.5 H12.8 V3.7 H8.7 V10.4 H12.8 V12.6 H1.3 V10.4 H5.4 V3.7 H1.3 Z" fill="#fff"/></svg>
<div class="t " style="left:336.3px;top:514px;font-size:13.8px;line-height:16px;">Arnold (Tilburg )</div>
<div class="t " style="left:614.8px;top:516px;font-size:13.8px;line-height:16px;">Ronsweersite</div>
<div class="t " style="left:775.9px;top:516px;font-size:13.8px;line-height:16px;">7.5</div>
<svg class="b" style="left:895.9px;top:516.58px" width="9.2" height="13.5" viewBox="0 0 9.2 13.5" preserveAspectRatio="none"><rect x="3.80" y="0" width="1.6" height="9.50" fill="#F03A1C"/><path d="M4.6 13.5 L9.2 8.5 L0 8.5 Z" fill="#F03A1C"/></svg>
<div class="t " style="left:937.1px;top:516px;font-size:13.8px;line-height:16px;">35</div>
<div class="t " style="left:1085.6px;top:516px;font-size:13.8px;line-height:16px;">173</div>
<svg class="b" style="left:1142.4px;top:516.28px" width="16" height="15" viewBox="0 0 16 15"><path d="M0.9 1.3 H10.6 Q14.1 1.3 14.1 4.7 V6.8 Q14.1 10.2 10.6 10.2 H4.5" fill="none" stroke="#000" stroke-width="1.25"/><path d="M0.5 10.2 L5.5 5.8 V14.7 Z" fill="#000"/></svg>
<div class="t " style="left:1184.9px;top:516px;font-size:13.8px;line-height:16px;">206.3</div>
<svg class="b" style="left:139px;top:512.98px" width="11" height="19.2" viewBox="0 0 11 19.2"><path d="M1 1 H10 V4.8 L7.3 8 H3.7 L1 4.8 Z" fill="#4e4e4e"/><path d="M2.5 1 H8.5 V4.8 L6.9 7.8 H4.1 L2.5 4.8 Z" fill="#F4BFA6"/><path d="M3.3 1 H7.7 V5 L6.6 8 H4.4 L3.3 5 Z" fill="#F0500F"/><rect x="0" y="0" width="11" height="1.15" fill="#111"/><circle cx="5.5" cy="13.6" r="5.5" fill="#0a0a0a"/><circle cx="5.5" cy="13.6" r="4.4" fill="#b4b9be"/><path d="M3.4 11.2 Q5.5 9.6 7 11 Q7.8 12.4 5.4 13.8 Q4 14.8 4 16 H7.4" fill="none" stroke="#26282b" stroke-width="1.3"/></svg>
<div class="b" style="left:2px;top:537.55px;width:39.30px;height:22.15px;background:#FFFFFF;"></div>
<div class="b" style="left:42.9px;top:537.55px;width:66.30px;height:22.15px;background:#FFFFFF;"></div>
<div class="b" style="left:110.9px;top:537.55px;width:197.20px;height:22.15px;background:#FFFFFF;"></div>
<div class="b" style="left:309.7px;top:537.55px;width:301.50px;height:22.15px;background:#FFFFFF;"></div>
<div class="b" style="left:613px;top:537.55px;width:160.10px;height:22.15px;background:#FFFFFF;"></div>
<div class="b" style="left:774.8px;top:537.55px;width:118.40px;height:22.15px;background:#FFFFFF;"></div>
<div class="b" style="left:894.8px;top:537.55px;width:39.30px;height:22.15px;background:#FFFFFF;"></div>
<div class="b" style="left:935.7px;top:537.55px;width:105.50px;height:22.15px;background:#FFFFFF;"></div>
<div class="b" style="left:1042.9px;top:537.55px;width:39.10px;height:22.15px;background:#FFFFFF;"></div>
<div class="b" style="left:1083.8px;top:537.55px;width:56.00px;height:22.15px;background:#FFFFFF;"></div>
<div class="b" style="left:1141.6px;top:537.55px;width:40.40px;height:22.15px;background:#FFFFFF;"></div>
<div class="b" style="left:1184px;top:537.55px;width:65.10px;height:22.15px;background:#FFFFFF;"></div>
<div class="b" style="left:1250.8px;top:537.55px;width:92.20px;height:22.15px;background:#FFFFFF;"></div>
<div class="t " style="left:3.3px;top:541px;font-size:13.8px;line-height:16px;">14</div>
<svg class="b" style="left:44.8px;top:540.05px" width="8.5" height="14.0" viewBox="0 0 8.5 14.0" preserveAspectRatio="none"><rect x="3.45" y="0" width="1.6" height="10.00" fill="#FF8470"/><path d="M4.25 14.0 L8.5 9.0 L0 9.0 Z" fill="#F03A1C"/></svg>
<div class="t " style="left:57.7px;top:542px;font-size:13.8px;line-height:16px;">(-1)</div>
<div class="t " style="left:112.5px;top:541px;font-size:13.8px;line-height:16px;">106</div>
<svg class="b" style="left:310.9px;top:544.25px" width="14.1" height="14.1" viewBox="0 0 14.1 14.1"><rect width="14.1" height="14.1" fill="#0000FF"/><rect x="1.1" y="1.1" width="11.9" height="11.9" fill="#0A1CFF"/><path d="M1.3 1.5 H12.8 V3.7 H8.7 V10.4 H12.8 V12.6 H1.3 V10.4 H5.4 V3.7 H1.3 Z" fill="#fff"/></svg>
<div class="t " style="left:336.3px;top:539px;font-size:13.8px;line-height:16px;">Pieter (Beek)</div>
<div class="t " style="left:614.8px;top:541px;font-size:13.8px;line-height:16px;">Nederland</div>
<div class="t " style="left:775.9px;top:541px;font-size:13.8px;line-height:16px;">7.3</div>
<svg class="b" style="left:895.9px;top:541.65px" width="9.2" height="13.5" viewBox="0 0 9.2 13.5" preserveAspectRatio="none"><rect x="3.80" y="0" width="1.6" height="9.50" fill="#F03A1C"/><path d="M4.6 13.5 L9.2 8.5 L0 8.5 Z" fill="#F03A1C"/></svg>
<div class="t " style="left:937.1px;top:541px;font-size:13.8px;line-height:16px;">36</div>
<div class="t " style="left:1085.6px;top:541px;font-size:13.8px;line-height:16px;">167</div>
<svg class="b" style="left:1142.4px;top:541.35px" width="16" height="15" viewBox="0 0 16 15"><path d="M0.9 1.3 H10.6 Q14.1 1.3 14.1 4.7 V6.8 Q14.1 10.2 10.6 10.2 H4.5" fill="none" stroke="#000" stroke-width="1.25"/><path d="M0.5 10.2 L5.5 5.8 V14.7 Z" fill="#000"/></svg>
<div class="t " style="left:1184.9px;top:541px;font-size:13.8px;line-height:16px;">205.6</div>
<div class="b" style="left:2px;top:561.4px;width:39.30px;height:21.20px;background:#FFFFFF;"></div>
<div class="b" style="left:42.9px;top:561.4px;width:66.30px;height:21.20px;background:#FFFFFF;"></div>
<div class="b" style="left:110.9px;top:561.4px;width:197.20px;height:21.20px;background:#FFFFFF;"></div>
<div class="b" style="left:309.7px;top:561.4px;width:301.50px;height:21.20px;background:#FFFFFF;"></div>
<div class="b" style="left:613px;top:561.4px;width:160.10px;height:21.20px;background:#FFFFFF;"></div>
<div class="b" style="left:774.8px;top:561.4px;width:118.40px;height:21.20px;background:#FFFFFF;"></div>
<div class="b" style="left:894.8px;top:561.4px;width:39.30px;height:21.20px;background:#FFFFFF;"></div>
<div class="b" style="left:935.7px;top:561.4px;width:105.50px;height:21.20px;background:#FFFFFF;"></div>
<div class="b" style="left:1042.9px;top:561.4px;width:39.10px;height:21.20px;background:#FFFFFF;"></div>
<div class="b" style="left:1083.8px;top:561.4px;width:56.00px;height:21.20px;background:#FFFFFF;"></div>
<div class="b" style="left:1141.6px;top:561.4px;width:40.40px;height:21.20px;background:#FFFFFF;"></div>
<div class="b" style="left:1184px;top:561.4px;width:65.10px;height:21.20px;background:#FFFFFF;"></div>
<div class="b" style="left:1250.8px;top:561.4px;width:92.20px;height:21.20px;background:#FFFFFF;"></div>
<div class="t " style="left:3.3px;top:565px;font-size:13.8px;line-height:16px;">15</div>
<svg class="b" style="left:44.8px;top:563.90px" width="8.5" height="14.0" viewBox="0 0 8.5 14.0" preserveAspectRatio="none"><rect x="3.45" y="0" width="1.6" height="10.00" fill="#FF8470"/><path d="M4.25 14.0 L8.5 9.0 L0 9.0 Z" fill="#F03A1C"/></svg>
<div class="t " style="left:57.7px;top:566px;font-size:13.8px;line-height:16px;">(-1)</div>
<div class="t " style="left:112.5px;top:565px;font-size:13.8px;line-height:16px;">27</div>
<svg class="b" style="left:310.9px;top:568.10px" width="14.1" height="14.1" viewBox="0 0 14.1 14.1"><rect width="14.1" height="14.1" fill="#0000FF"/><rect x="1.1" y="1.1" width="11.9" height="11.9" fill="#0A1CFF"/><path d="M1.3 1.5 H12.8 V3.7 H8.7 V10.4 H12.8 V12.6 H1.3 V10.4 H5.4 V3.7 H1.3 Z" fill="#fff"/></svg>
<div class="t " style="left:336.3px;top:563px;font-size:13.8px;line-height:16px;">Bart (O.-L.-V.-Waver)</div>
<div class="t " style="left:614.8px;top:565px;font-size:13.8px;line-height:16px;">België</div>
<div class="t " style="left:775.9px;top:565px;font-size:13.8px;line-height:16px;">7.5</div>
<svg class="b" style="left:895.9px;top:565.50px" width="9.2" height="13.5" viewBox="0 0 9.2 13.5" preserveAspectRatio="none"><rect x="3.80" y="0" width="1.6" height="9.50" fill="#F03A1C"/><path d="M4.6 13.5 L9.2 8.5 L0 8.5 Z" fill="#F03A1C"/></svg>
<div class="t " style="left:937.1px;top:565px;font-size:13.8px;line-height:16px;">33</div>
<div class="t " style="left:1085.6px;top:565px;font-size:13.8px;line-height:16px;">169</div>
<svg class="b" style="left:1142.4px;top:565.20px" width="16" height="15" viewBox="0 0 16 15"><path d="M0.9 1.3 H10.6 Q14.1 1.3 14.1 4.7 V6.8 Q14.1 10.2 10.6 10.2 H4.5" fill="none" stroke="#000" stroke-width="1.25"/><path d="M0.5 10.2 L5.5 5.8 V14.7 Z" fill="#000"/></svg>
<div class="t " style="left:1184.9px;top:565px;font-size:13.8px;line-height:16px;">205</div>
<div class="b" style="left:2px;top:584.3px;width:39.30px;height:21.60px;background:#FFFFFF;"></div>
<div class="b" style="left:42.9px;top:584.3px;width:66.30px;height:21.60px;background:#FFFFFF;"></div>
<div class="b" style="left:110.9px;top:584.3px;width:197.20px;height:21.60px;background:#FFFFFF;"></div>
<div class="b" style="left:309.7px;top:584.3px;width:301.50px;height:21.60px;background:#FFFFFF;"></div>
<div class="b" style="left:613px;top:584.3px;width:160.10px;height:21.60px;background:#FFFFFF;"></div>
<div class="b" style="left:774.8px;top:584.3px;width:118.40px;height:21.60px;background:#FFFFFF;"></div>
<div class="b" style="left:894.8px;top:584.3px;width:39.30px;height:21.60px;background:#FFFFFF;"></div>
<div class="b" style="left:935.7px;top:584.3px;width:105.50px;height:21.60px;background:#FFFFFF;"></div>
<div class="b" style="left:1042.9px;top:584.3px;width:39.10px;height:21.60px;background:#FFFFFF;"></div>
<div class="b" style="left:1083.8px;top:584.3px;width:56.00px;height:21.60px;background:#FFFFFF;"></div>
<div class="b" style="left:1141.6px;top:584.3px;width:40.40px;height:21.60px;background:#FFFFFF;"></div>
<div class="b" style="left:1184px;top:584.3px;width:65.10px;height:21.60px;background:#FFFFFF;"></div>
<div class="b" style="left:1250.8px;top:584.3px;width:92.20px;height:21.60px;background:#FFFFFF;"></div>
<div class="t " style="left:3.3px;top:588px;font-size:13.8px;line-height:16px;">16</div>
<svg class="b" style="left:44.8px;top:586.80px" width="8.5" height="14.0" viewBox="0 0 8.5 14.0" preserveAspectRatio="none"><rect x="3.45" y="0" width="1.6" height="10.00" fill="#FF8470"/><path d="M4.25 14.0 L8.5 9.0 L0 9.0 Z" fill="#F03A1C"/></svg>
<div class="t " style="left:57.7px;top:589px;font-size:13.8px;line-height:16px;">(-1)</div>
<div class="t " style="left:112.5px;top:588px;font-size:13.8px;line-height:16px;">168</div>
<svg class="b" style="left:310.9px;top:591.00px" width="14.1" height="14.1" viewBox="0 0 14.1 14.1"><rect width="14.1" height="14.1" fill="#0000FF"/><rect x="1.1" y="1.1" width="11.9" height="11.9" fill="#0A1CFF"/><path d="M1.3 1.5 H12.8 V3.7 H8.7 V10.4 H12.8 V12.6 H1.3 V10.4 H5.4 V3.7 H1.3 Z" fill="#fff"/></svg>
<div class="t " style="left:336.3px;top:586px;font-size:13.8px;line-height:16px;">Daniël (Aalsmeer)</div>
<div class="t " style="left:614.8px;top:588px;font-size:13.8px;line-height:16px;">Nederland</div>
<div class="t " style="left:775.9px;top:588px;font-size:13.8px;line-height:16px;">7.5</div>
<svg class="b" style="left:895.9px;top:588.40px" width="9.2" height="13.5" viewBox="0 0 9.2 13.5" preserveAspectRatio="none"><rect x="3.80" y="0" width="1.6" height="9.50" fill="#F03A1C"/><path d="M4.6 13.5 L9.2 8.5 L0 8.5 Z" fill="#F03A1C"/></svg>
<div class="t " style="left:937.1px;top:588px;font-size:13.8px;line-height:16px;">30</div>
<div class="t " style="left:1085.6px;top:588px;font-size:13.8px;line-height:16px;">165</div>
<svg class="b" style="left:1142.4px;top:588.10px" width="16" height="15" viewBox="0 0 16 15"><path d="M0.9 1.3 H10.6 Q14.1 1.3 14.1 4.7 V6.8 Q14.1 10.2 10.6 10.2 H4.5" fill="none" stroke="#000" stroke-width="1.25"/><path d="M0.5 10.2 L5.5 5.8 V14.7 Z" fill="#000"/></svg>
<div class="t " style="left:1184.9px;top:588px;font-size:13.8px;line-height:16px;">204.8</div>
<div class="b" style="left:2px;top:607.5999999999999px;width:39.30px;height:21.77px;background:#FFFFFF;"></div>
<div class="b" style="left:42.9px;top:607.5999999999999px;width:66.30px;height:21.77px;background:#FFFFFF;"></div>
<div class="b" style="left:110.9px;top:607.5999999999999px;width:197.20px;height:21.77px;background:#FFFFFF;"></div>
<div class="b" style="left:309.7px;top:607.5999999999999px;width:301.50px;height:21.77px;background:#FFFFFF;"></div>
<div class="b" style="left:613px;top:607.5999999999999px;width:160.10px;height:21.77px;background:#FFFFFF;"></div>
<div class="b" style="left:774.8px;top:607.5999999999999px;width:118.40px;height:21.77px;background:#FFFFFF;"></div>
<div class="b" style="left:894.8px;top:607.5999999999999px;width:39.30px;height:21.77px;background:#FFFFFF;"></div>
<div class="b" style="left:935.7px;top:607.5999999999999px;width:105.50px;height:21.77px;background:#FFFFFF;"></div>
<div class="b" style="left:1042.9px;top:607.5999999999999px;width:39.10px;height:21.77px;background:#FFFFFF;"></div>
<div class="b" style="left:1083.8px;top:607.5999999999999px;width:56.00px;height:21.77px;background:#FFFFFF;"></div>
<div class="b" style="left:1141.6px;top:607.5999999999999px;width:40.40px;height:21.77px;background:#FFFFFF;"></div>
<div class="b" style="left:1184px;top:607.5999999999999px;width:65.10px;height:21.77px;background:#FFFFFF;"></div>
<div class="b" style="left:1250.8px;top:607.5999999999999px;width:92.20px;height:21.77px;background:#FFFFFF;"></div>
<div class="t " style="left:3.3px;top:611px;font-size:13.8px;line-height:16px;">17</div>
<svg class="b" style="left:44.8px;top:610.10px" width="8.5" height="14.0" viewBox="0 0 8.5 14.0" preserveAspectRatio="none"><rect x="3.45" y="0" width="1.6" height="10.00" fill="#FF8470"/><path d="M4.25 14.0 L8.5 9.0 L0 9.0 Z" fill="#F03A1C"/></svg>
<div class="t " style="left:57.7px;top:612px;font-size:13.8px;line-height:16px;">(-1)</div>
<div class="t " style="left:112.5px;top:611px;font-size:13.8px;line-height:16px;">82</div>
<svg class="b" style="left:310.9px;top:614.30px" width="14.1" height="14.1" viewBox="0 0 14.1 14.1"><rect width="14.1" height="14.1" fill="#0000FF"/><rect x="1.1" y="1.1" width="11.9" height="11.9" fill="#0A1CFF"/><path d="M1.3 1.5 H12.8 V3.7 H8.7 V10.4 H12.8 V12.6 H1.3 V10.4 H5.4 V3.7 H1.3 Z" fill="#fff"/></svg>
<div class="t " style="left:336.3px;top:609px;font-size:13.8px;line-height:16px;">Jaap (Doorn)</div>
<div class="t " style="left:614.8px;top:611px;font-size:13.8px;line-height:16px;">Nederland</div>
<div class="t " style="left:775.9px;top:611px;font-size:13.8px;line-height:16px;">7.6</div>
<svg class="b" style="left:895.9px;top:611.70px" width="9.2" height="13.5" viewBox="0 0 9.2 13.5" preserveAspectRatio="none"><rect x="3.80" y="0" width="1.6" height="9.50" fill="#F03A1C"/><path d="M4.6 13.5 L9.2 8.5 L0 8.5 Z" fill="#F03A1C"/></svg>
<div class="t " style="left:937.1px;top:611px;font-size:13.8px;line-height:16px;">36</div>
<div class="t " style="left:1085.6px;top:611px;font-size:13.8px;line-height:16px;">175</div>
<svg class="b" style="left:1142.4px;top:611.40px" width="16" height="15" viewBox="0 0 16 15"><path d="M0.9 1.3 H10.6 Q14.1 1.3 14.1 4.7 V6.8 Q14.1 10.2 10.6 10.2 H4.5" fill="none" stroke="#000" stroke-width="1.25"/><path d="M0.5 10.2 L5.5 5.8 V14.7 Z" fill="#000"/></svg>
<div class="t " style="left:1184.9px;top:611px;font-size:13.8px;line-height:16px;">204.3</div>
<div class="b" style="left:2px;top:631.0699999999999px;width:39.30px;height:21.59px;background:#FFFFFF;"></div>
<div class="b" style="left:42.9px;top:631.0699999999999px;width:66.30px;height:21.59px;background:#FFFFFF;"></div>
<div class="b" style="left:110.9px;top:631.0699999999999px;width:197.20px;height:21.59px;background:#FFFFFF;"></div>
<div class="b" style="left:309.7px;top:631.0699999999999px;width:301.50px;height:21.59px;background:#FFFFFF;"></div>
<div class="b" style="left:613px;top:631.0699999999999px;width:160.10px;height:21.59px;background:#FFFFFF;"></div>
<div class="b" style="left:774.8px;top:631.0699999999999px;width:118.40px;height:21.59px;background:#FFFFFF;"></div>
<div class="b" style="left:894.8px;top:631.0699999999999px;width:39.30px;height:21.59px;background:#FFFFFF;"></div>
<div class="b" style="left:935.7px;top:631.0699999999999px;width:105.50px;height:21.59px;background:#FFFFFF;"></div>
<div class="b" style="left:1042.9px;top:631.0699999999999px;width:39.10px;height:21.59px;background:#FFFFFF;"></div>
<div class="b" style="left:1083.8px;top:631.0699999999999px;width:56.00px;height:21.59px;background:#FFFFFF;"></div>
<div class="b" style="left:1141.6px;top:631.0699999999999px;width:40.40px;height:21.59px;background:#FFFFFF;"></div>
<div class="b" style="left:1184px;top:631.0699999999999px;width:65.10px;height:21.59px;background:#FFFFFF;"></div>
<div class="b" style="left:1250.8px;top:631.0699999999999px;width:92.20px;height:21.59px;background:#FFFFFF;"></div>
<div class="t " style="left:3.3px;top:635px;font-size:13.8px;line-height:16px;">18</div>
<svg class="b" style="left:44.8px;top:633.57px" width="8.5" height="14.0" viewBox="0 0 8.5 14.0" preserveAspectRatio="none"><rect x="3.45" y="0" width="1.6" height="10.00" fill="#FF8470"/><path d="M4.25 14.0 L8.5 9.0 L0 9.0 Z" fill="#F03A1C"/></svg>
<div class="t " style="left:57.7px;top:636px;font-size:13.8px;line-height:16px;">(-1)</div>
<div class="t " style="left:112.5px;top:635px;font-size:13.8px;line-height:16px;">34</div>
<svg class="b" style="left:310.9px;top:637.77px" width="14.1" height="14.1" viewBox="0 0 14.1 14.1"><rect width="14.1" height="14.1" fill="#0000FF"/><rect x="1.1" y="1.1" width="11.9" height="11.9" fill="#0A1CFF"/><path d="M1.3 1.5 H12.8 V3.7 H8.7 V10.4 H12.8 V12.6 H1.3 V10.4 H5.4 V3.7 H1.3 Z" fill="#fff"/></svg>
<div class="t " style="left:336.3px;top:633px;font-size:13.8px;line-height:16px;">Wietse (Groningen)</div>
<div class="t " style="left:614.8px;top:635px;font-size:13.8px;line-height:16px;">Nederland</div>
<div class="t " style="left:775.9px;top:635px;font-size:13.8px;line-height:16px;">7.6</div>
<svg class="b" style="left:895.9px;top:635.17px" width="9.2" height="13.5" viewBox="0 0 9.2 13.5" preserveAspectRatio="none"><rect x="3.80" y="0" width="1.6" height="9.50" fill="#F03A1C"/><path d="M4.6 13.5 L9.2 8.5 L0 8.5 Z" fill="#F03A1C"/></svg>
<div class="t " style="left:937.1px;top:635px;font-size:13.8px;line-height:16px;">29</div>
<div class="t " style="left:1085.6px;top:635px;font-size:13.8px;line-height:16px;">166</div>
<svg class="b" style="left:1142.4px;top:634.87px" width="16" height="15" viewBox="0 0 16 15"><path d="M0.9 1.3 H10.6 Q14.1 1.3 14.1 4.7 V6.8 Q14.1 10.2 10.6 10.2 H4.5" fill="none" stroke="#000" stroke-width="1.25"/><path d="M0.5 10.2 L5.5 5.8 V14.7 Z" fill="#000"/></svg>
<div class="t " style="left:1184.9px;top:635px;font-size:13.8px;line-height:16px;">204</div>
<div class="b" style="left:2px;top:654.3599999999999px;width:39.30px;height:21.58px;background:#FFFFFF;"></div>
<div class="b" style="left:42.9px;top:654.3599999999999px;width:66.30px;height:21.58px;background:#FFFFFF;"></div>
<div class="b" style="left:110.9px;top:654.3599999999999px;width:197.20px;height:21.58px;background:#FFFFFF;"></div>
<div class="b" style="left:309.7px;top:654.3599999999999px;width:301.50px;height:21.58px;background:#FFFFFF;"></div>
<div class="b" style="left:613px;top:654.3599999999999px;width:160.10px;height:21.58px;background:#FFFFFF;"></div>
<div class="b" style="left:774.8px;top:654.3599999999999px;width:118.40px;height:21.58px;background:#FFFFFF;"></div>
<div class="b" style="left:894.8px;top:654.3599999999999px;width:39.30px;height:21.58px;background:#FFFFFF;"></div>
<div class="b" style="left:935.7px;top:654.3599999999999px;width:105.50px;height:21.58px;background:#FFFFFF;"></div>
<div class="b" style="left:1042.9px;top:654.3599999999999px;width:39.10px;height:21.58px;background:#FFFFFF;"></div>
<div class="b" style="left:1083.8px;top:654.3599999999999px;width:56.00px;height:21.58px;background:#FFFFFF;"></div>
<div class="b" style="left:1141.6px;top:654.3599999999999px;width:40.40px;height:21.58px;background:#FFFFFF;"></div>
<div class="b" style="left:1184px;top:654.3599999999999px;width:65.10px;height:21.58px;background:#FFFFFF;"></div>
<div class="b" style="left:1250.8px;top:654.3599999999999px;width:92.20px;height:21.58px;background:#FFFFFF;"></div>
<div class="t " style="left:3.3px;top:658px;font-size:13.8px;line-height:16px;">19</div>
<svg class="b" style="left:44.8px;top:657.16px" width="8.5" height="13.3" viewBox="0 0 8.5 13.3" preserveAspectRatio="none"><rect x="3.40" y="4" width="1.7" height="9.30" fill="#84FF58"/><path d="M4.25 0 L8.5 5 L0 5 Z" fill="#66FF33"/></svg>
<div class="t " style="left:57.7px;top:659px;font-size:13.8px;line-height:16px;">(+8)</div>
<div class="t " style="left:112.5px;top:658px;font-size:13.8px;line-height:16px;">72</div>
<svg class="b" style="left:310.9px;top:661.06px" width="14.1" height="14.1" viewBox="0 0 14.1 14.1"><rect width="14.1" height="14.1" fill="#0000FF"/><rect x="1.1" y="1.1" width="11.9" height="11.9" fill="#0A1CFF"/><path d="M1.3 1.5 H12.8 V3.7 H8.7 V10.4 H12.8 V12.6 H1.3 V10.4 H5.4 V3.7 H1.3 Z" fill="#fff"/></svg>
<div class="t " style="left:336.3px;top:656px;font-size:13.8px;line-height:16px;">Robin (Tiel)</div>
<div class="t " style="left:614.8px;top:658px;font-size:13.8px;line-height:16px;">Nederland</div>
<div class="t gb" style="left:775.9px;top:658px;font-size:13.8px;line-height:16px;">7.1</div>
<svg class="b" style="left:895.9px;top:657.96px" width="9.2" height="14.1" viewBox="0 0 9.2 14.1" preserveAspectRatio="none"><rect x="3.75" y="4" width="1.7" height="10.10" fill="#66FF33"/><path d="M4.6 0 L9.2 5 L0 5 Z" fill="#66FF33"/></svg>
<div class="t " style="left:937.1px;top:658px;font-size:13.8px;line-height:16px;">42</div>
<div class="t " style="left:1085.6px;top:658px;font-size:13.8px;line-height:16px;">159</div>
<svg class="b" style="left:1142.4px;top:658.16px" width="16" height="15" viewBox="0 0 16 15"><path d="M0.9 1.3 H10.6 Q14.1 1.3 14.1 4.7 V6.8 Q14.1 10.2 10.6 10.2 H4.5" fill="none" stroke="#000" stroke-width="1.25"/><path d="M0.5 10.2 L5.5 5.8 V14.7 Z" fill="#000"/></svg>
<div class="t " style="left:1184.9px;top:658px;font-size:13.8px;line-height:16px;">203.3</div>
<div class="t " style="left:1251.9px;top:658px;font-size:13.8px;line-height:16px;">(198.3 <span style="color:#EE3030">+ 5</span>)</div>
<div class="b" style="left:2px;top:677.64px;width:39.30px;height:21.94px;background:#FFFFFF;"></div>
<div class="b" style="left:42.9px;top:677.64px;width:66.30px;height:21.94px;background:#FFFFFF;"></div>
<div class="b" style="left:110.9px;top:677.64px;width:197.20px;height:21.94px;background:#FFFFFF;"></div>
<div class="b" style="left:309.7px;top:677.64px;width:301.50px;height:21.94px;background:#FFFFFF;"></div>
<div class="b" style="left:613px;top:677.64px;width:160.10px;height:21.94px;background:#FFFFFF;"></div>
<div class="b" style="left:774.8px;top:677.64px;width:118.40px;height:21.94px;background:#FFFFFF;"></div>
<div class="b" style="left:894.8px;top:677.64px;width:39.30px;height:21.94px;background:#FFFFFF;"></div>
<div class="b" style="left:935.7px;top:677.64px;width:105.50px;height:21.94px;background:#FFFFFF;"></div>
<div class="b" style="left:1042.9px;top:677.64px;width:39.10px;height:21.94px;background:#FFFFFF;"></div>
<div class="b" style="left:1083.8px;top:677.64px;width:56.00px;height:21.94px;background:#FFFFFF;"></div>
<div class="b" style="left:1141.6px;top:677.64px;width:40.40px;height:21.94px;background:#FFFFFF;"></div>
<div class="b" style="left:1184px;top:677.64px;width:65.10px;height:21.94px;background:#FFFFFF;"></div>
<div class="b" style="left:1250.8px;top:677.64px;width:92.20px;height:21.94px;background:#FFFFFF;"></div>
<div class="t " style="left:3.3px;top:681px;font-size:13.8px;line-height:16px;">20</div>
<svg class="b" style="left:44.8px;top:680.44px" width="8.5" height="13.3" viewBox="0 0 8.5 13.3" preserveAspectRatio="none"><rect x="3.40" y="4" width="1.7" height="9.30" fill="#84FF58"/><path d="M4.25 0 L8.5 5 L0 5 Z" fill="#66FF33"/></svg>
<div class="t " style="left:57.7px;top:682px;font-size:13.8px;line-height:16px;">(+9)</div>
<div class="t " style="left:112.5px;top:681px;font-size:13.8px;line-height:16px;">116</div>
<svg class="b" style="left:310.9px;top:684.34px" width="14.1" height="14.1" viewBox="0 0 14.1 14.1"><rect width="14.1" height="14.1" fill="#0000FF"/><rect x="1.1" y="1.1" width="11.9" height="11.9" fill="#0A1CFF"/><path d="M1.3 1.5 H12.8 V3.7 H8.7 V10.4 H12.8 V12.6 H1.3 V10.4 H5.4 V3.7 H1.3 Z" fill="#fff"/></svg>
<div class="t " style="left:336.3px;top:679px;font-size:13.8px;line-height:16px;">Geert (Lint)</div>
<div class="t " style="left:614.8px;top:681px;font-size:13.8px;line-height:16px;">België</div>
<div class="t gb" style="left:775.9px;top:681px;font-size:13.8px;line-height:16px;">7.1</div>
<svg class="b" style="left:895.9px;top:681.24px" width="9.2" height="14.1" viewBox="0 0 9.2 14.1" preserveAspectRatio="none"><rect x="3.75" y="4" width="1.7" height="10.10" fill="#66FF33"/><path d="M4.6 0 L9.2 5 L0 5 Z" fill="#66FF33"/></svg>
<div class="t " style="left:937.1px;top:681px;font-size:13.8px;line-height:16px;">46</div>
<div class="t " style="left:1085.6px;top:681px;font-size:13.8px;line-height:16px;">163</div>
<svg class="b" style="left:1142.4px;top:681.44px" width="16" height="15" viewBox="0 0 16 15"><path d="M0.9 1.3 H10.6 Q14.1 1.3 14.1 4.7 V6.8 Q14.1 10.2 10.6 10.2 H4.5" fill="none" stroke="#000" stroke-width="1.25"/><path d="M0.5 10.2 L5.5 5.8 V14.7 Z" fill="#000"/></svg>
<div class="t " style="left:1184.9px;top:681px;font-size:13.8px;line-height:16px;">202.5</div>
<div class="t " style="left:1251.9px;top:681px;font-size:13.8px;line-height:16px;">(197.5 <span style="color:#EE3030">+ 5</span>)</div>
<div class="b" style="left:2px;top:701.28px;width:39.30px;height:21.59px;background:#FFFFFF;"></div>
<div class="b" style="left:42.9px;top:701.28px;width:66.30px;height:21.59px;background:#FFFFFF;"></div>
<div class="b" style="left:110.9px;top:701.28px;width:197.20px;height:21.59px;background:#FFFFFF;"></div>
<div class="b" style="left:309.7px;top:701.28px;width:301.50px;height:21.59px;background:#FFFFFF;"></div>
<div class="b" style="left:613px;top:701.28px;width:160.10px;height:21.59px;background:#FFFFFF;"></div>
<div class="b" style="left:774.8px;top:701.28px;width:118.40px;height:21.59px;background:#FFFFFF;"></div>
<div class="b" style="left:894.8px;top:701.28px;width:39.30px;height:21.59px;background:#FFFFFF;"></div>
<div class="b" style="left:935.7px;top:701.28px;width:105.50px;height:21.59px;background:#FFFFFF;"></div>
<div class="b" style="left:1042.9px;top:701.28px;width:39.10px;height:21.59px;background:#FFFFFF;"></div>
<div class="b" style="left:1083.8px;top:701.28px;width:56.00px;height:21.59px;background:#FFFFFF;"></div>
<div class="b" style="left:1141.6px;top:701.28px;width:40.40px;height:21.59px;background:#FFFFFF;"></div>
<div class="b" style="left:1184px;top:701.28px;width:65.10px;height:21.59px;background:#FFFFFF;"></div>
<div class="b" style="left:1250.8px;top:701.28px;width:92.20px;height:21.59px;background:#FFFFFF;"></div>
<div class="t " style="left:3.3px;top:705px;font-size:13.8px;line-height:16px;">21</div>
<svg class="b" style="left:44.8px;top:704.08px" width="8.5" height="13.3" viewBox="0 0 8.5 13.3" preserveAspectRatio="none"><rect x="3.40" y="4" width="1.7" height="9.30" fill="#84FF58"/><path d="M4.25 0 L8.5 5 L0 5 Z" fill="#66FF33"/></svg>
<div class="t " style="left:57.7px;top:706px;font-size:13.8px;line-height:16px;">(+1)</div>
<div class="t " style="left:112.5px;top:705px;font-size:13.8px;line-height:16px;">34</div>
<svg class="b" style="left:310.9px;top:707.98px" width="14.1" height="14.1" viewBox="0 0 14.1 14.1"><rect width="14.1" height="14.1" fill="#0000FF"/><rect x="1.1" y="1.1" width="11.9" height="11.9" fill="#0A1CFF"/><path d="M1.3 1.5 H12.8 V3.7 H8.7 V10.4 H12.8 V12.6 H1.3 V10.4 H5.4 V3.7 H1.3 Z" fill="#fff"/></svg>
<div class="t " style="left:336.3px;top:703px;font-size:13.8px;line-height:16px;">Teun (Westland)</div>
<div class="t " style="left:614.8px;top:705px;font-size:13.8px;line-height:16px;">Nederland</div>
<div class="t " style="left:775.9px;top:705px;font-size:13.8px;line-height:16px;">6.9</div>
<svg class="b" style="left:895.9px;top:704.88px" width="9.2" height="14.1" viewBox="0 0 9.2 14.1" preserveAspectRatio="none"><rect x="3.75" y="4" width="1.7" height="10.10" fill="#66FF33"/><path d="M4.6 0 L9.2 5 L0 5 Z" fill="#66FF33"/></svg>
<div class="t " style="left:937.1px;top:705px;font-size:13.8px;line-height:16px;">35</div>
<div class="t " style="left:1085.6px;top:705px;font-size:13.8px;line-height:16px;">161</div>
<svg class="b" style="left:1142.4px;top:705.08px" width="16" height="15" viewBox="0 0 16 15"><path d="M0.9 1.3 H10.6 Q14.1 1.3 14.1 4.7 V6.8 Q14.1 10.2 10.6 10.2 H4.5" fill="none" stroke="#000" stroke-width="1.25"/><path d="M0.5 10.2 L5.5 5.8 V14.7 Z" fill="#000"/></svg>
<div class="t " style="left:1184.9px;top:705px;font-size:13.8px;line-height:16px;">201.7</div>
<div class="b" style="left:2px;top:724.5699999999999px;width:39.30px;height:22.03px;background:#FFFFFF;"></div>
<div class="b" style="left:42.9px;top:724.5699999999999px;width:66.30px;height:22.03px;background:#FFFFFF;"></div>
<div class="b" style="left:110.9px;top:724.5699999999999px;width:197.20px;height:22.03px;background:#FFFFFF;"></div>
<div class="b" style="left:309.7px;top:724.5699999999999px;width:301.50px;height:22.03px;background:#FFFFFF;"></div>
<div class="b" style="left:613px;top:724.5699999999999px;width:160.10px;height:22.03px;background:#FFFFFF;"></div>
<div class="b" style="left:774.8px;top:724.5699999999999px;width:118.40px;height:22.03px;background:#FFFFFF;"></div>
<div class="b" style="left:894.8px;top:724.5699999999999px;width:39.30px;height:22.03px;background:#FFFFFF;"></div>
<div class="b" style="left:935.7px;top:724.5699999999999px;width:105.50px;height:22.03px;background:#FFFFFF;"></div>
<div class="b" style="left:1042.9px;top:724.5699999999999px;width:39.10px;height:22.03px;background:#FFFFFF;"></div>
<div class="b" style="left:1083.8px;top:724.5699999999999px;width:56.00px;height:22.03px;background:#FFFFFF;"></div>
<div class="b" style="left:1141.6px;top:724.5699999999999px;width:40.40px;height:22.03px;background:#FFFFFF;"></div>
<div class="b" style="left:1184px;top:724.5699999999999px;width:65.10px;height:22.03px;background:#FFFFFF;"></div>
<div class="b" style="left:1250.8px;top:724.5699999999999px;width:92.20px;height:22.03px;background:#FFFFFF;"></div>
<div class="t " style="left:3.3px;top:728px;font-size:13.8px;line-height:16px;">22</div>
<svg class="b" style="left:44.8px;top:727.37px" width="8.5" height="13.3" viewBox="0 0 8.5 13.3" preserveAspectRatio="none"><rect x="3.40" y="4" width="1.7" height="9.30" fill="#84FF58"/><path d="M4.25 0 L8.5 5 L0 5 Z" fill="#66FF33"/></svg>
<div class="t " style="left:57.7px;top:729px;font-size:13.8px;line-height:16px;">(+14)</div>
<div class="t " style="left:112.5px;top:728px;font-size:13.8px;line-height:16px;">119</div>
<svg class="b" style="left:310.9px;top:731.27px" width="14.1" height="14.1" viewBox="0 0 14.1 14.1"><rect width="14.1" height="14.1" fill="#0000FF"/><rect x="1.1" y="1.1" width="11.9" height="11.9" fill="#0A1CFF"/><path d="M1.3 1.5 H12.8 V3.7 H8.7 V10.4 H12.8 V12.6 H1.3 V10.4 H5.4 V3.7 H1.3 Z" fill="#fff"/></svg>
<div class="t " style="left:336.3px;top:726px;font-size:13.8px;line-height:16px;">André (Hoofddorp)</div>
<div class="t " style="left:614.8px;top:728px;font-size:13.8px;line-height:16px;">Nederland</div>
<div class="t gb" style="left:775.9px;top:728px;font-size:13.8px;line-height:16px;">7.1</div>
<svg class="b" style="left:895.9px;top:728.17px" width="9.2" height="14.1" viewBox="0 0 9.2 14.1" preserveAspectRatio="none"><rect x="3.75" y="4" width="1.7" height="10.10" fill="#66FF33"/><path d="M4.6 0 L9.2 5 L0 5 Z" fill="#66FF33"/></svg>
<div class="t " style="left:937.1px;top:728px;font-size:13.8px;line-height:16px;">50</div>
<div class="t " style="left:1085.6px;top:728px;font-size:13.8px;line-height:16px;">165</div>
<svg class="b" style="left:1142.4px;top:728.37px" width="16" height="15" viewBox="0 0 16 15"><path d="M0.9 1.3 H10.6 Q14.1 1.3 14.1 4.7 V6.8 Q14.1 10.2 10.6 10.2 H4.5" fill="none" stroke="#000" stroke-width="1.25"/><path d="M0.5 10.2 L5.5 5.8 V14.7 Z" fill="#000"/></svg>
<div class="t " style="left:1184.9px;top:728px;font-size:13.8px;line-height:16px;">200.1</div>
<div class="t " style="left:1251.9px;top:728px;font-size:13.8px;line-height:16px;">(195.1 <span style="color:#EE3030">+ 5</span>)</div>
<div class="b" style="left:2px;top:748.3px;width:39.30px;height:21.88px;background:#FFFFFF;"></div>
<div class="b" style="left:42.9px;top:748.3px;width:66.30px;height:21.88px;background:#FFFFFF;"></div>
<div class="b" style="left:110.9px;top:748.3px;width:197.20px;height:21.88px;background:#FFFFFF;"></div>
<div class="b" style="left:309.7px;top:748.3px;width:301.50px;height:21.88px;background:#FFFFFF;"></div>
<div class="b" style="left:613px;top:748.3px;width:160.10px;height:21.88px;background:#FFFFFF;"></div>
<div class="b" style="left:774.8px;top:748.3px;width:118.40px;height:21.88px;background:#FFFFFF;"></div>
<div class="b" style="left:894.8px;top:748.3px;width:39.30px;height:21.88px;background:#FFFFFF;"></div>
<div class="b" style="left:935.7px;top:748.3px;width:105.50px;height:21.88px;background:#FFFFFF;"></div>
<div class="b" style="left:1042.9px;top:748.3px;width:39.10px;height:21.88px;background:#FFFFFF;"></div>
<div class="b" style="left:1083.8px;top:748.3px;width:56.00px;height:21.88px;background:#FFFFFF;"></div>
<div class="b" style="left:1141.6px;top:748.3px;width:40.40px;height:21.88px;background:#FFFFFF;"></div>
<div class="b" style="left:1184px;top:748.3px;width:65.10px;height:21.88px;background:#FFFFFF;"></div>
<div class="b" style="left:1250.8px;top:748.3px;width:92.20px;height:21.88px;background:#FFFFFF;"></div>
<div class="t " style="left:3.3px;top:752px;font-size:13.8px;line-height:16px;">23</div>
<svg class="b" style="left:44.8px;top:751.10px" width="8.5" height="13.3" viewBox="0 0 8.5 13.3" preserveAspectRatio="none"><rect x="3.40" y="4" width="1.7" height="9.30" fill="#84FF58"/><path d="M4.25 0 L8.5 5 L0 5 Z" fill="#66FF33"/></svg>
<div class="t " style="left:57.7px;top:753px;font-size:13.8px;line-height:16px;">(+7)</div>
<div class="t " style="left:112.5px;top:752px;font-size:13.8px;line-height:16px;">149</div>
<svg class="b" style="left:310.9px;top:755.00px" width="14.1" height="14.1" viewBox="0 0 14.1 14.1"><rect width="14.1" height="14.1" fill="#0000FF"/><rect x="1.1" y="1.1" width="11.9" height="11.9" fill="#0A1CFF"/><path d="M1.3 1.5 H12.8 V3.7 H8.7 V10.4 H12.8 V12.6 H1.3 V10.4 H5.4 V3.7 H1.3 Z" fill="#fff"/></svg>
<div class="t " style="left:336.3px;top:750px;font-size:13.8px;line-height:16px;">Ton (Papendrecht)</div>
<div class="t " style="left:614.8px;top:752px;font-size:13.8px;line-height:16px;">Nederland</div>
<div class="t " style="left:775.9px;top:752px;font-size:13.8px;line-height:16px;">7.0</div>
<svg class="b" style="left:895.9px;top:751.90px" width="9.2" height="14.1" viewBox="0 0 9.2 14.1" preserveAspectRatio="none"><rect x="3.75" y="4" width="1.7" height="10.10" fill="#66FF33"/><path d="M4.6 0 L9.2 5 L0 5 Z" fill="#66FF33"/></svg>
<div class="t " style="left:937.1px;top:752px;font-size:13.8px;line-height:16px;">41</div>
<div class="t " style="left:1085.6px;top:752px;font-size:13.8px;line-height:16px;">160</div>
<svg class="b" style="left:1142.4px;top:752.10px" width="16" height="15" viewBox="0 0 16 15"><path d="M0.9 1.3 H10.6 Q14.1 1.3 14.1 4.7 V6.8 Q14.1 10.2 10.6 10.2 H4.5" fill="none" stroke="#000" stroke-width="1.25"/><path d="M0.5 10.2 L5.5 5.8 V14.7 Z" fill="#000"/></svg>
<div class="t " style="left:1184.9px;top:752px;font-size:13.8px;line-height:16px;">197.5</div>
<div class="b" style="left:2px;top:771.88px;width:39.30px;height:21.12px;background:#FFFFFF;"></div>
<div class="b" style="left:42.9px;top:771.88px;width:66.30px;height:21.12px;background:#FFFFFF;"></div>
<div class="b" style="left:110.9px;top:771.88px;width:197.20px;height:21.12px;background:#FFFFFF;"></div>
<div class="b" style="left:309.7px;top:771.88px;width:301.50px;height:21.12px;background:#FFFFFF;"></div>
<div class="b" style="left:613px;top:771.88px;width:160.10px;height:21.12px;background:#FFFFFF;"></div>
<div class="b" style="left:774.8px;top:771.88px;width:118.40px;height:21.12px;background:#FFFFFF;"></div>
<div class="b" style="left:894.8px;top:771.88px;width:39.30px;height:21.12px;background:#FFFFFF;"></div>
<div class="b" style="left:935.7px;top:771.88px;width:105.50px;height:21.12px;background:#FFFFFF;"></div>
<div class="b" style="left:1042.9px;top:771.88px;width:39.10px;height:21.12px;background:#FFFFFF;"></div>
<div class="b" style="left:1083.8px;top:771.88px;width:56.00px;height:21.12px;background:#FFFFFF;"></div>
<div class="b" style="left:1141.6px;top:771.88px;width:40.40px;height:21.12px;background:#FFFFFF;"></div>
<div class="b" style="left:1184px;top:771.88px;width:65.10px;height:21.12px;background:#FFFFFF;"></div>
<div class="b" style="left:1250.8px;top:771.88px;width:92.20px;height:21.12px;background:#FFFFFF;"></div>
<div class="t " style="left:3.3px;top:775px;font-size:13.8px;line-height:16px;">24</div>
<svg class="b" style="left:44.8px;top:774.38px" width="8.5" height="14.0" viewBox="0 0 8.5 14.0" preserveAspectRatio="none"><rect x="3.45" y="0" width="1.6" height="10.00" fill="#FF8470"/><path d="M4.25 14.0 L8.5 9.0 L0 9.0 Z" fill="#F03A1C"/></svg>
<div class="t " style="left:57.7px;top:776px;font-size:13.8px;line-height:16px;">(-4)</div>
<div class="t " style="left:112.5px;top:775px;font-size:13.8px;line-height:16px;">75</div>
<svg class="b" style="left:310.9px;top:778.58px" width="14.1" height="14.1" viewBox="0 0 14.1 14.1"><rect width="14.1" height="14.1" fill="#0000FF"/><rect x="1.1" y="1.1" width="11.9" height="11.9" fill="#0A1CFF"/><path d="M1.3 1.5 H12.8 V3.7 H8.7 V10.4 H12.8 V12.6 H1.3 V10.4 H5.4 V3.7 H1.3 Z" fill="#fff"/></svg>
<div class="t " style="left:336.3px;top:774px;font-size:13.8px;line-height:16px;">Tim (Steenwijkerwold)</div>
<div class="t " style="left:614.8px;top:775px;font-size:13.8px;line-height:16px;">Nederland</div>
<div class="t " style="left:775.9px;top:775px;font-size:13.8px;line-height:16px;">7.9</div>
<svg class="b" style="left:895.9px;top:775.98px" width="9.2" height="13.5" viewBox="0 0 9.2 13.5" preserveAspectRatio="none"><rect x="3.80" y="0" width="1.6" height="9.50" fill="#F03A1C"/><path d="M4.6 13.5 L9.2 8.5 L0 8.5 Z" fill="#F03A1C"/></svg>
<div class="t " style="left:937.1px;top:775px;font-size:13.8px;line-height:16px;">23</div>
<div class="t " style="left:1085.6px;top:775px;font-size:13.8px;line-height:16px;">160</div>
<svg class="b" style="left:1142.4px;top:775.68px" width="16" height="15" viewBox="0 0 16 15"><path d="M0.9 1.3 H10.6 Q14.1 1.3 14.1 4.7 V6.8 Q14.1 10.2 10.6 10.2 H4.5" fill="none" stroke="#000" stroke-width="1.25"/><path d="M0.5 10.2 L5.5 5.8 V14.7 Z" fill="#000"/></svg>
<div class="t " style="left:1184.9px;top:775px;font-size:13.8px;line-height:16px;">197.3</div>
<div class="b" style="left:2px;top:794.6999999999999px;width:39.30px;height:22.05px;background:#FFFFFF;"></div>
<div class="b" style="left:42.9px;top:794.6999999999999px;width:66.30px;height:22.05px;background:#FFFFFF;"></div>
<div class="b" style="left:110.9px;top:794.6999999999999px;width:197.20px;height:22.05px;background:#FFFFFF;"></div>
<div class="b" style="left:309.7px;top:794.6999999999999px;width:301.50px;height:22.05px;background:#FFFFFF;"></div>
<div class="b" style="left:613px;top:794.6999999999999px;width:160.10px;height:22.05px;background:#FFFFFF;"></div>
<div class="b" style="left:774.8px;top:794.6999999999999px;width:118.40px;height:22.05px;background:#FFFFFF;"></div>
<div class="b" style="left:894.8px;top:794.6999999999999px;width:39.30px;height:22.05px;background:#FFFFFF;"></div>
<div class="b" style="left:935.7px;top:794.6999999999999px;width:105.50px;height:22.05px;background:#FFFFFF;"></div>
<div class="b" style="left:1042.9px;top:794.6999999999999px;width:39.10px;height:22.05px;background:#FFFFFF;"></div>
<div class="b" style="left:1083.8px;top:794.6999999999999px;width:56.00px;height:22.05px;background:#FFFFFF;"></div>
<div class="b" style="left:1141.6px;top:794.6999999999999px;width:40.40px;height:22.05px;background:#FFFFFF;"></div>
<div class="b" style="left:1184px;top:794.6999999999999px;width:65.10px;height:22.05px;background:#FFFFFF;"></div>
<div class="b" style="left:1250.8px;top:794.6999999999999px;width:92.20px;height:22.05px;background:#FFFFFF;"></div>
<div class="t " style="left:3.3px;top:798px;font-size:13.8px;line-height:16px;">25</div>
<svg class="b" style="left:44.8px;top:797.50px" width="8.5" height="13.3" viewBox="0 0 8.5 13.3" preserveAspectRatio="none"><rect x="3.40" y="4" width="1.7" height="9.30" fill="#84FF58"/><path d="M4.25 0 L8.5 5 L0 5 Z" fill="#66FF33"/></svg>
<div class="t " style="left:57.7px;top:799px;font-size:13.8px;line-height:16px;">(+9)</div>
<div class="t " style="left:112.5px;top:798px;font-size:13.8px;line-height:16px;">97</div>
<svg class="b" style="left:310.9px;top:801.40px" width="14.1" height="14.1" viewBox="0 0 14.1 14.1"><rect width="14.1" height="14.1" fill="#0000FF"/><rect x="1.1" y="1.1" width="11.9" height="11.9" fill="#0A1CFF"/><path d="M1.3 1.5 H12.8 V3.7 H8.7 V10.4 H12.8 V12.6 H1.3 V10.4 H5.4 V3.7 H1.3 Z" fill="#fff"/></svg>
<div class="t " style="left:336.3px;top:796px;font-size:13.8px;line-height:16px;">Stephan (Haarlem)</div>
<div class="t " style="left:614.8px;top:798px;font-size:13.8px;line-height:16px;">Nederland</div>
<div class="t " style="left:775.9px;top:798px;font-size:13.8px;line-height:16px;">6.9</div>
<svg class="b" style="left:895.9px;top:798.30px" width="9.2" height="14.1" viewBox="0 0 9.2 14.1" preserveAspectRatio="none"><rect x="3.75" y="4" width="1.7" height="10.10" fill="#66FF33"/><path d="M4.6 0 L9.2 5 L0 5 Z" fill="#66FF33"/></svg>
<div class="t " style="left:937.1px;top:798px;font-size:13.8px;line-height:16px;">39</div>
<div class="t " style="left:1085.6px;top:798px;font-size:13.8px;line-height:16px;">160</div>
<svg class="b" style="left:1142.4px;top:798.50px" width="16" height="15" viewBox="0 0 16 15"><path d="M0.9 1.3 H10.6 Q14.1 1.3 14.1 4.7 V6.8 Q14.1 10.2 10.6 10.2 H4.5" fill="none" stroke="#000" stroke-width="1.25"/><path d="M0.5 10.2 L5.5 5.8 V14.7 Z" fill="#000"/></svg>
<div class="t " style="left:1184.9px;top:798px;font-size:13.8px;line-height:16px;">196.9</div>
<div class="b" style="left:2px;top:818.4499999999999px;width:39.30px;height:21.58px;background:#FFFFFF;"></div>
<div class="b" style="left:42.9px;top:818.4499999999999px;width:66.30px;height:21.58px;background:#FFFFFF;"></div>
<div class="b" style="left:110.9px;top:818.4499999999999px;width:197.20px;height:21.58px;background:#FFFFFF;"></div>
<div class="b" style="left:309.7px;top:818.4499999999999px;width:301.50px;height:21.58px;background:#FFFFFF;"></div>
<div class="b" style="left:613px;top:818.4499999999999px;width:160.10px;height:21.58px;background:#FFFFFF;"></div>
<div class="b" style="left:774.8px;top:818.4499999999999px;width:118.40px;height:21.58px;background:#FFFFFF;"></div>
<div class="b" style="left:894.8px;top:818.4499999999999px;width:39.30px;height:21.58px;background:#FFFFFF;"></div>
<div class="b" style="left:935.7px;top:818.4499999999999px;width:105.50px;height:21.58px;background:#FFFFFF;"></div>
<div class="b" style="left:1042.9px;top:818.4499999999999px;width:39.10px;height:21.58px;background:#FFFFFF;"></div>
<div class="b" style="left:1083.8px;top:818.4499999999999px;width:56.00px;height:21.58px;background:#FFFFFF;"></div>
<div class="b" style="left:1141.6px;top:818.4499999999999px;width:40.40px;height:21.58px;background:#FFFFFF;"></div>
<div class="b" style="left:1184px;top:818.4499999999999px;width:65.10px;height:21.58px;background:#FFFFFF;"></div>
<div class="b" style="left:1250.8px;top:818.4499999999999px;width:92.20px;height:21.58px;background:#FFFFFF;"></div>
<div class="t " style="left:3.3px;top:822px;font-size:13.8px;line-height:16px;">26</div>
<svg class="b" style="left:44.8px;top:820.95px" width="8.5" height="14.0" viewBox="0 0 8.5 14.0" preserveAspectRatio="none"><rect x="3.45" y="0" width="1.6" height="10.00" fill="#FF8470"/><path d="M4.25 14.0 L8.5 9.0 L0 9.0 Z" fill="#F03A1C"/></svg>
<div class="t " style="left:57.7px;top:823px;font-size:13.8px;line-height:16px;">(-7)</div>
<div class="t " style="left:112.5px;top:822px;font-size:13.8px;line-height:16px;">25</div>
<svg class="b" style="left:310.9px;top:825.15px" width="14.1" height="14.1" viewBox="0 0 14.1 14.1"><rect width="14.1" height="14.1" fill="#0000FF"/><rect x="1.1" y="1.1" width="11.9" height="11.9" fill="#0A1CFF"/><path d="M1.3 1.5 H12.8 V3.7 H8.7 V10.4 H12.8 V12.6 H1.3 V10.4 H5.4 V3.7 H1.3 Z" fill="#fff"/></svg>
<div class="t " style="left:336.3px;top:820px;font-size:13.8px;line-height:16px;">Jef (Zolder, Limburg)</div>
<div class="t " style="left:614.8px;top:822px;font-size:13.8px;line-height:16px;">België</div>
<div class="t " style="left:775.9px;top:822px;font-size:13.8px;line-height:16px;">7.2</div>
<svg class="b" style="left:895.9px;top:822.55px" width="9.2" height="13.5" viewBox="0 0 9.2 13.5" preserveAspectRatio="none"><rect x="3.80" y="0" width="1.6" height="9.50" fill="#F03A1C"/><path d="M4.6 13.5 L9.2 8.5 L0 8.5 Z" fill="#F03A1C"/></svg>
<div class="t " style="left:937.1px;top:822px;font-size:13.8px;line-height:16px;">42</div>
<div class="t " style="left:1085.6px;top:822px;font-size:13.8px;line-height:16px;">160</div>
<svg class="b" style="left:1142.4px;top:822.25px" width="16" height="15" viewBox="0 0 16 15"><path d="M0.9 1.3 H10.6 Q14.1 1.3 14.1 4.7 V6.8 Q14.1 10.2 10.6 10.2 H4.5" fill="none" stroke="#000" stroke-width="1.25"/><path d="M0.5 10.2 L5.5 5.8 V14.7 Z" fill="#000"/></svg>
<div class="t " style="left:1184.9px;top:822px;font-size:13.8px;line-height:16px;">196.5</div>
<div class="b" style="left:2px;top:841.7299999999999px;width:39.30px;height:20.97px;background:#FFFFFF;"></div>
<div class="b" style="left:42.9px;top:841.7299999999999px;width:66.30px;height:20.97px;background:#FFFFFF;"></div>
<div class="b" style="left:110.9px;top:841.7299999999999px;width:197.20px;height:20.97px;background:#FFFFFF;"></div>
<div class="b" style="left:309.7px;top:841.7299999999999px;width:301.50px;height:20.97px;background:#FFFFFF;"></div>
<div class="b" style="left:613px;top:841.7299999999999px;width:160.10px;height:20.97px;background:#FFFFFF;"></div>
<div class="b" style="left:774.8px;top:841.7299999999999px;width:118.40px;height:20.97px;background:#FFFFFF;"></div>
<div class="b" style="left:894.8px;top:841.7299999999999px;width:39.30px;height:20.97px;background:#FFFFFF;"></div>
<div class="b" style="left:935.7px;top:841.7299999999999px;width:105.50px;height:20.97px;background:#FFFFFF;"></div>
<div class="b" style="left:1042.9px;top:841.7299999999999px;width:39.10px;height:20.97px;background:#FFFFFF;"></div>
<div class="b" style="left:1083.8px;top:841.7299999999999px;width:56.00px;height:20.97px;background:#FFFFFF;"></div>
<div class="b" style="left:1141.6px;top:841.7299999999999px;width:40.40px;height:20.97px;background:#FFFFFF;"></div>
<div class="b" style="left:1184px;top:841.7299999999999px;width:65.10px;height:20.97px;background:#FFFFFF;"></div>
<div class="b" style="left:1250.8px;top:841.7299999999999px;width:92.20px;height:20.97px;background:#FFFFFF;"></div>
<div class="t " style="left:3.3px;top:845px;font-size:13.8px;line-height:16px;">27</div>
<svg class="b" style="left:44.8px;top:844.23px" width="8.5" height="14.0" viewBox="0 0 8.5 14.0" preserveAspectRatio="none"><rect x="3.45" y="0" width="1.6" height="10.00" fill="#FF8470"/><path d="M4.25 14.0 L8.5 9.0 L0 9.0 Z" fill="#F03A1C"/></svg>
<div class="t " style="left:57.7px;top:846px;font-size:13.8px;line-height:16px;">(-4)</div>
<div class="t " style="left:112.5px;top:845px;font-size:13.8px;line-height:16px;">95</div>
<svg class="b" style="left:310.9px;top:848.43px" width="14.1" height="14.1" viewBox="0 0 14.1 14.1"><rect width="14.1" height="14.1" fill="#0000FF"/><rect x="1.1" y="1.1" width="11.9" height="11.9" fill="#0A1CFF"/><path d="M1.3 1.5 H12.8 V3.7 H8.7 V10.4 H12.8 V12.6 H1.3 V10.4 H5.4 V3.7 H1.3 Z" fill="#fff"/></svg>
<div class="t " style="left:336.3px;top:843px;font-size:13.8px;line-height:16px;">Erik Jan (Elburg)</div>
<div class="t " style="left:614.8px;top:845px;font-size:13.8px;line-height:16px;">Nederland</div>
<div class="t " style="left:775.9px;top:845px;font-size:13.8px;line-height:16px;">7.4</div>
<svg class="b" style="left:895.9px;top:845.83px" width="9.2" height="13.5" viewBox="0 0 9.2 13.5" preserveAspectRatio="none"><rect x="3.80" y="0" width="1.6" height="9.50" fill="#F03A1C"/><path d="M4.6 13.5 L9.2 8.5 L0 8.5 Z" fill="#F03A1C"/></svg>
<div class="t " style="left:937.1px;top:845px;font-size:13.8px;line-height:16px;">32</div>
<div class="t " style="left:1085.6px;top:845px;font-size:13.8px;line-height:16px;">154</div>
<svg class="b" style="left:1142.4px;top:845.53px" width="16" height="15" viewBox="0 0 16 15"><path d="M0.9 1.3 H10.6 Q14.1 1.3 14.1 4.7 V6.8 Q14.1 10.2 10.6 10.2 H4.5" fill="none" stroke="#000" stroke-width="1.25"/><path d="M0.5 10.2 L5.5 5.8 V14.7 Z" fill="#000"/></svg>
<div class="t " style="left:1184.9px;top:845px;font-size:13.8px;line-height:16px;">196.4</div>
<div class="b" style="left:2px;top:864.4px;width:39.30px;height:22.30px;background:#FFFFFF;"></div>
<div class="b" style="left:42.9px;top:864.4px;width:66.30px;height:22.30px;background:#FFFFFF;"></div>
<div class="b" style="left:110.9px;top:864.4px;width:197.20px;height:22.30px;background:#FFFFFF;"></div>
<div class="b" style="left:309.7px;top:864.4px;width:301.50px;height:22.30px;background:#FFFFFF;"></div>
<div class="b" style="left:613px;top:864.4px;width:160.10px;height:22.30px;background:#FFFFFF;"></div>
<div class="b" style="left:774.8px;top:864.4px;width:118.40px;height:22.30px;background:#FFFFFF;"></div>
<div class="b" style="left:894.8px;top:864.4px;width:39.30px;height:22.30px;background:#FFFFFF;"></div>
<div class="b" style="left:935.7px;top:864.4px;width:105.50px;height:22.30px;background:#FFFFFF;"></div>
<div class="b" style="left:1042.9px;top:864.4px;width:39.10px;height:22.30px;background:#FFFFFF;"></div>
<div class="b" style="left:1083.8px;top:864.4px;width:56.00px;height:22.30px;background:#FFFFFF;"></div>
<div class="b" style="left:1141.6px;top:864.4px;width:40.40px;height:22.30px;background:#FFFFFF;"></div>
<div class="b" style="left:1184px;top:864.4px;width:65.10px;height:22.30px;background:#FFFFFF;"></div>
<div class="b" style="left:1250.8px;top:864.4px;width:92.20px;height:22.30px;background:#FFFFFF;"></div>
<div class="t " style="left:3.3px;top:868px;font-size:13.8px;line-height:16px;">27</div>
<svg class="b" style="left:44.8px;top:867.20px" width="8.5" height="13.3" viewBox="0 0 8.5 13.3" preserveAspectRatio="none"><rect x="3.40" y="4" width="1.7" height="9.30" fill="#84FF58"/><path d="M4.25 0 L8.5 5 L0 5 Z" fill="#66FF33"/></svg>
<div class="t " style="left:57.7px;top:869px;font-size:13.8px;line-height:16px;">(+8)</div>
<div class="t " style="left:112.5px;top:868px;font-size:13.8px;line-height:16px;">170</div>
<svg class="b" style="left:310.9px;top:871.10px" width="14.1" height="14.1" viewBox="0 0 14.1 14.1"><rect width="14.1" height="14.1" fill="#0000FF"/><rect x="1.1" y="1.1" width="11.9" height="11.9" fill="#0A1CFF"/><path d="M1.3 1.5 H12.8 V3.7 H8.7 V10.4 H12.8 V12.6 H1.3 V10.4 H5.4 V3.7 H1.3 Z" fill="#fff"/></svg>
<div class="t " style="left:336.3px;top:866px;font-size:13.8px;line-height:16px;">Michael (Culemborg)</div>
<div class="t " style="left:614.8px;top:868px;font-size:13.8px;line-height:16px;">Nederland</div>
<div class="t " style="left:775.9px;top:868px;font-size:13.8px;line-height:16px;">7.0</div>
<svg class="b" style="left:895.9px;top:868.00px" width="9.2" height="14.1" viewBox="0 0 9.2 14.1" preserveAspectRatio="none"><rect x="3.75" y="4" width="1.7" height="10.10" fill="#66FF33"/><path d="M4.6 0 L9.2 5 L0 5 Z" fill="#66FF33"/></svg>
<div class="t " style="left:937.1px;top:868px;font-size:13.8px;line-height:16px;">34</div>
<div class="t " style="left:1085.6px;top:868px;font-size:13.8px;line-height:16px;">150</div>
<svg class="b" style="left:1142.4px;top:868.20px" width="16" height="15" viewBox="0 0 16 15"><path d="M0.9 1.3 H10.6 Q14.1 1.3 14.1 4.7 V6.8 Q14.1 10.2 10.6 10.2 H4.5" fill="none" stroke="#000" stroke-width="1.25"/><path d="M0.5 10.2 L5.5 5.8 V14.7 Z" fill="#000"/></svg>
<div class="t " style="left:1184.9px;top:868px;font-size:13.8px;line-height:16px;">196.4</div>
<div class="b" style="left:2px;top:888.4px;width:39.30px;height:21.15px;background:#FFFFFF;"></div>
<div class="b" style="left:42.9px;top:888.4px;width:66.30px;height:21.15px;background:#FFFFFF;"></div>
<div class="b" style="left:110.9px;top:888.4px;width:197.20px;height:21.15px;background:#FFFFFF;"></div>
<div class="b" style="left:309.7px;top:888.4px;width:301.50px;height:21.15px;background:#FFFFFF;"></div>
<div class="b" style="left:613px;top:888.4px;width:160.10px;height:21.15px;background:#FFFFFF;"></div>
<div class="b" style="left:774.8px;top:888.4px;width:118.40px;height:21.15px;background:#FFFFFF;"></div>
<div class="b" style="left:894.8px;top:888.4px;width:39.30px;height:21.15px;background:#FFFFFF;"></div>
<div class="b" style="left:935.7px;top:888.4px;width:105.50px;height:21.15px;background:#FFFFFF;"></div>
<div class="b" style="left:1042.9px;top:888.4px;width:39.10px;height:21.15px;background:#FFFFFF;"></div>
<div class="b" style="left:1083.8px;top:888.4px;width:56.00px;height:21.15px;background:#FFFFFF;"></div>
<div class="b" style="left:1141.6px;top:888.4px;width:40.40px;height:21.15px;background:#FFFFFF;"></div>
<div class="b" style="left:1184px;top:888.4px;width:65.10px;height:21.15px;background:#FFFFFF;"></div>
<div class="b" style="left:1250.8px;top:888.4px;width:92.20px;height:21.15px;background:#FFFFFF;"></div>
<div class="t " style="left:3.3px;top:892px;font-size:13.8px;line-height:16px;">29</div>
<svg class="b" style="left:44.8px;top:890.90px" width="8.5" height="14.0" viewBox="0 0 8.5 14.0" preserveAspectRatio="none"><rect x="3.45" y="0" width="1.6" height="10.00" fill="#FF8470"/><path d="M4.25 14.0 L8.5 9.0 L0 9.0 Z" fill="#F03A1C"/></svg>
<div class="t " style="left:57.7px;top:893px;font-size:13.8px;line-height:16px;">(-5)</div>
<div class="t " style="left:112.5px;top:892px;font-size:13.8px;line-height:16px;">143</div>
<svg class="b" style="left:310.9px;top:895.10px" width="14.1" height="14.1" viewBox="0 0 14.1 14.1"><rect width="14.1" height="14.1" fill="#0000FF"/><rect x="1.1" y="1.1" width="11.9" height="11.9" fill="#0A1CFF"/><path d="M1.3 1.5 H12.8 V3.7 H8.7 V10.4 H12.8 V12.6 H1.3 V10.4 H5.4 V3.7 H1.3 Z" fill="#fff"/></svg>
<div class="t " style="left:336.3px;top:890px;font-size:13.8px;line-height:16px;">Jelle (Nijkerk)</div>
<div class="t " style="left:614.8px;top:892px;font-size:13.8px;line-height:16px;">Nederland</div>
<div class="t " style="left:775.9px;top:892px;font-size:13.8px;line-height:16px;">7.5</div>
<svg class="b" style="left:895.9px;top:892.50px" width="9.2" height="13.5" viewBox="0 0 9.2 13.5" preserveAspectRatio="none"><rect x="3.80" y="0" width="1.6" height="9.50" fill="#F03A1C"/><path d="M4.6 13.5 L9.2 8.5 L0 8.5 Z" fill="#F03A1C"/></svg>
<div class="t " style="left:937.1px;top:892px;font-size:13.8px;line-height:16px;">39</div>
<div class="t " style="left:1085.6px;top:892px;font-size:13.8px;line-height:16px;">165</div>
<svg class="b" style="left:1142.4px;top:892.20px" width="16" height="15" viewBox="0 0 16 15"><path d="M0.9 1.3 H10.6 Q14.1 1.3 14.1 4.7 V6.8 Q14.1 10.2 10.6 10.2 H4.5" fill="none" stroke="#000" stroke-width="1.25"/><path d="M0.5 10.2 L5.5 5.8 V14.7 Z" fill="#000"/></svg>
<div class="t " style="left:1184.9px;top:892px;font-size:13.8px;line-height:16px;">195.7</div>
<div class="b" style="left:2px;top:911.25px;width:39.30px;height:22.15px;background:#FFFFFF;"></div>
<div class="b" style="left:42.9px;top:911.25px;width:66.30px;height:22.15px;background:#FFFFFF;"></div>
<div class="b" style="left:110.9px;top:911.25px;width:197.20px;height:22.15px;background:#FFFFFF;"></div>
<div class="b" style="left:309.7px;top:911.25px;width:301.50px;height:22.15px;background:#FFFFFF;"></div>
<div class="b" style="left:613px;top:911.25px;width:160.10px;height:22.15px;background:#FFFFFF;"></div>
<div class="b" style="left:774.8px;top:911.25px;width:118.40px;height:22.15px;background:#FFFFFF;"></div>
<div class="b" style="left:894.8px;top:911.25px;width:39.30px;height:22.15px;background:#FFFFFF;"></div>
<div class="b" style="left:935.7px;top:911.25px;width:105.50px;height:22.15px;background:#FFFFFF;"></div>
<div class="b" style="left:1042.9px;top:911.25px;width:39.10px;height:22.15px;background:#FFFFFF;"></div>
<div class="b" style="left:1083.8px;top:911.25px;width:56.00px;height:22.15px;background:#FFFFFF;"></div>
<div class="b" style="left:1141.6px;top:911.25px;width:40.40px;height:22.15px;background:#FFFFFF;"></div>
<div class="b" style="left:1184px;top:911.25px;width:65.10px;height:22.15px;background:#FFFFFF;"></div>
<div class="b" style="left:1250.8px;top:911.25px;width:92.20px;height:22.15px;background:#FFFFFF;"></div>
<div class="t " style="left:3.3px;top:915px;font-size:13.8px;line-height:16px;">30</div>
<svg class="b" style="left:44.8px;top:913.75px" width="8.5" height="14.0" viewBox="0 0 8.5 14.0" preserveAspectRatio="none"><rect x="3.45" y="0" width="1.6" height="10.00" fill="#FF8470"/><path d="M4.25 14.0 L8.5 9.0 L0 9.0 Z" fill="#F03A1C"/></svg>
<div class="t " style="left:57.7px;top:916px;font-size:13.8px;line-height:16px;">(-5)</div>
<div class="t " style="left:112.5px;top:915px;font-size:13.8px;line-height:16px;">117</div>
<svg class="b" style="left:310.9px;top:917.95px" width="14.1" height="14.1" viewBox="0 0 14.1 14.1"><rect width="14.1" height="14.1" fill="#0000FF"/><rect x="1.1" y="1.1" width="11.9" height="11.9" fill="#0A1CFF"/><path d="M1.3 1.5 H12.8 V3.7 H8.7 V10.4 H12.8 V12.6 H1.3 V10.4 H5.4 V3.7 H1.3 Z" fill="#fff"/></svg>
<div class="t " style="left:336.3px;top:913px;font-size:13.8px;line-height:16px;">Jelmer (Rotterdam)</div>
<div class="t " style="left:614.8px;top:915px;font-size:13.8px;line-height:16px;">Nederland</div>
<div class="t " style="left:775.9px;top:915px;font-size:13.8px;line-height:16px;">8.4</div>
<svg class="b" style="left:895.9px;top:915.35px" width="9.2" height="13.5" viewBox="0 0 9.2 13.5" preserveAspectRatio="none"><rect x="3.80" y="0" width="1.6" height="9.50" fill="#F03A1C"/><path d="M4.6 13.5 L9.2 8.5 L0 8.5 Z" fill="#F03A1C"/></svg>
<div class="t " style="left:937.1px;top:915px;font-size:13.8px;line-height:16px;">27</div>
<div class="t " style="left:1085.6px;top:915px;font-size:13.8px;line-height:16px;">179</div>
<svg class="b" style="left:1142.4px;top:915.05px" width="16" height="15" viewBox="0 0 16 15"><path d="M0.9 1.3 H10.6 Q14.1 1.3 14.1 4.7 V6.8 Q14.1 10.2 10.6 10.2 H4.5" fill="none" stroke="#000" stroke-width="1.25"/><path d="M0.5 10.2 L5.5 5.8 V14.7 Z" fill="#000"/></svg>
<div class="t " style="left:1184.9px;top:915px;font-size:13.8px;line-height:16px;">195.6</div>
<div class="b" style="left:2px;top:935.0999999999999px;width:39.30px;height:21.40px;background:#FFFFFF;"></div>
<div class="b" style="left:42.9px;top:935.0999999999999px;width:66.30px;height:21.40px;background:#FFFFFF;"></div>
<div class="b" style="left:110.9px;top:935.0999999999999px;width:197.20px;height:21.40px;background:#FFFFFF;"></div>
<div class="b" style="left:309.7px;top:935.0999999999999px;width:301.50px;height:21.40px;background:#FFFFFF;"></div>
<div class="b" style="left:613px;top:935.0999999999999px;width:160.10px;height:21.40px;background:#FFFFFF;"></div>
<div class="b" style="left:774.8px;top:935.0999999999999px;width:118.40px;height:21.40px;background:#FFFFFF;"></div>
<div class="b" style="left:894.8px;top:935.0999999999999px;width:39.30px;height:21.40px;background:#FFFFFF;"></div>
<div class="b" style="left:935.7px;top:935.0999999999999px;width:105.50px;height:21.40px;background:#FFFFFF;"></div>
<div class="b" style="left:1042.9px;top:935.0999999999999px;width:39.10px;height:21.40px;background:#FFFFFF;"></div>
<div class="b" style="left:1083.8px;top:935.0999999999999px;width:56.00px;height:21.40px;background:#FFFFFF;"></div>
<div class="b" style="left:1141.6px;top:935.0999999999999px;width:40.40px;height:21.40px;background:#FFFFFF;"></div>
<div class="b" style="left:1184px;top:935.0999999999999px;width:65.10px;height:21.40px;background:#FFFFFF;"></div>
<div class="b" style="left:1250.8px;top:935.0999999999999px;width:92.20px;height:21.40px;background:#FFFFFF;"></div>
<div class="t " style="left:3.3px;top:939px;font-size:13.8px;line-height:16px;">31</div>
<svg class="b" style="left:44.8px;top:937.60px" width="8.5" height="14.0" viewBox="0 0 8.5 14.0" preserveAspectRatio="none"><rect x="3.45" y="0" width="1.6" height="10.00" fill="#FF8470"/><path d="M4.25 14.0 L8.5 9.0 L0 9.0 Z" fill="#F03A1C"/></svg>
<div class="t " style="left:57.7px;top:940px;font-size:13.8px;line-height:16px;">(-5)</div>
<div class="t " style="left:112.5px;top:939px;font-size:13.8px;line-height:16px;">56</div>
<svg class="b" style="left:310.9px;top:941.80px" width="14.1" height="14.1" viewBox="0 0 14.1 14.1"><rect width="14.1" height="14.1" fill="#0000FF"/><rect x="1.1" y="1.1" width="11.9" height="11.9" fill="#0A1CFF"/><path d="M1.3 1.5 H12.8 V3.7 H8.7 V10.4 H12.8 V12.6 H1.3 V10.4 H5.4 V3.7 H1.3 Z" fill="#fff"/></svg>
<div class="t " style="left:336.3px;top:937px;font-size:13.8px;line-height:16px;">Stan (Oss)</div>
<div class="t " style="left:614.8px;top:939px;font-size:13.8px;line-height:16px;">Nederland</div>
<div class="t " style="left:775.9px;top:939px;font-size:13.8px;line-height:16px;">7.7</div>
<svg class="b" style="left:895.9px;top:939.20px" width="9.2" height="13.5" viewBox="0 0 9.2 13.5" preserveAspectRatio="none"><rect x="3.80" y="0" width="1.6" height="9.50" fill="#F03A1C"/><path d="M4.6 13.5 L9.2 8.5 L0 8.5 Z" fill="#F03A1C"/></svg>
<div class="t " style="left:937.1px;top:939px;font-size:13.8px;line-height:16px;">48</div>
<div class="t " style="left:1085.6px;top:939px;font-size:13.8px;line-height:16px;">182</div>
<svg class="b" style="left:1142.4px;top:938.90px" width="16" height="15" viewBox="0 0 16 15"><path d="M0.9 1.3 H10.6 Q14.1 1.3 14.1 4.7 V6.8 Q14.1 10.2 10.6 10.2 H4.5" fill="none" stroke="#000" stroke-width="1.25"/><path d="M0.5 10.2 L5.5 5.8 V14.7 Z" fill="#000"/></svg>
<div class="t " style="left:1184.9px;top:939px;font-size:13.8px;line-height:16px;">195.3</div>
<div class="b" style="left:2px;top:958.1999999999999px;width:39.30px;height:21.60px;background:#FFFFFF;"></div>
<div class="b" style="left:42.9px;top:958.1999999999999px;width:66.30px;height:21.60px;background:#FFFFFF;"></div>
<div class="b" style="left:110.9px;top:958.1999999999999px;width:197.20px;height:21.60px;background:#FFFFFF;"></div>
<div class="b" style="left:309.7px;top:958.1999999999999px;width:301.50px;height:21.60px;background:#FFFFFF;"></div>
<div class="b" style="left:613px;top:958.1999999999999px;width:160.10px;height:21.60px;background:#FFFFFF;"></div>
<div class="b" style="left:774.8px;top:958.1999999999999px;width:118.40px;height:21.60px;background:#FFFFFF;"></div>
<div class="b" style="left:894.8px;top:958.1999999999999px;width:39.30px;height:21.60px;background:#FFFFFF;"></div>
<div class="b" style="left:935.7px;top:958.1999999999999px;width:105.50px;height:21.60px;background:#FFFFFF;"></div>
<div class="b" style="left:1042.9px;top:958.1999999999999px;width:39.10px;height:21.60px;background:#FFFFFF;"></div>
<div class="b" style="left:1083.8px;top:958.1999999999999px;width:56.00px;height:21.60px;background:#FFFFFF;"></div>
<div class="b" style="left:1141.6px;top:958.1999999999999px;width:40.40px;height:21.60px;background:#FFFFFF;"></div>
<div class="b" style="left:1184px;top:958.1999999999999px;width:65.10px;height:21.60px;background:#FFFFFF;"></div>
<div class="b" style="left:1250.8px;top:958.1999999999999px;width:92.20px;height:21.60px;background:#FFFFFF;"></div>
<div class="t " style="left:3.3px;top:962px;font-size:13.8px;line-height:16px;">32</div>
<svg class="b" style="left:44.8px;top:961.00px" width="8.5" height="13.3" viewBox="0 0 8.5 13.3" preserveAspectRatio="none"><rect x="3.40" y="4" width="1.7" height="9.30" fill="#84FF58"/><path d="M4.25 0 L8.5 5 L0 5 Z" fill="#66FF33"/></svg>
<div class="t " style="left:57.7px;top:963px;font-size:13.8px;line-height:16px;">(+23)</div>
<div class="t " style="left:112.5px;top:962px;font-size:13.8px;line-height:16px;">2</div>
<svg class="b" style="left:310.9px;top:964.90px" width="14.1" height="14.1" viewBox="0 0 14.1 14.1"><rect width="14.1" height="14.1" fill="#0000FF"/><rect x="1.1" y="1.1" width="11.9" height="11.9" fill="#0A1CFF"/><path d="M1.3 1.5 H12.8 V3.7 H8.7 V10.4 H12.8 V12.6 H1.3 V10.4 H5.4 V3.7 H1.3 Z" fill="#fff"/></svg>
<div class="t " style="left:336.3px;top:960px;font-size:13.8px;line-height:16px;">Bart (Stuifzand)</div>
<div class="t " style="left:614.8px;top:962px;font-size:13.8px;line-height:16px;">Nederland</div>
<div class="t gb" style="left:775.9px;top:962px;font-size:13.8px;line-height:16px;">7.1</div>
<svg class="b" style="left:895.9px;top:961.80px" width="9.2" height="14.1" viewBox="0 0 9.2 14.1" preserveAspectRatio="none"><rect x="3.75" y="4" width="1.7" height="10.10" fill="#66FF33"/><path d="M4.6 0 L9.2 5 L0 5 Z" fill="#66FF33"/></svg>
<div class="t " style="left:937.1px;top:962px;font-size:13.8px;line-height:16px;">38</div>
<div class="t " style="left:1085.6px;top:962px;font-size:13.8px;line-height:16px;">143</div>
<svg class="b" style="left:1142.4px;top:962.00px" width="16" height="15" viewBox="0 0 16 15"><path d="M0.9 1.3 H10.6 Q14.1 1.3 14.1 4.7 V6.8 Q14.1 10.2 10.6 10.2 H4.5" fill="none" stroke="#000" stroke-width="1.25"/><path d="M0.5 10.2 L5.5 5.8 V14.7 Z" fill="#000"/></svg>
<div class="t " style="left:1184.9px;top:962px;font-size:13.8px;line-height:16px;">194.3</div>
<div class="t " style="left:1251.9px;top:962px;font-size:13.8px;line-height:16px;">(189.3 <span style="color:#EE3030">+ 5</span>)</div>
<div class="b" style="left:2px;top:981.5px;width:39.30px;height:21.90px;background:#FFFFFF;"></div>
<div class="b" style="left:42.9px;top:981.5px;width:66.30px;height:21.90px;background:#FFFFFF;"></div>
<div class="b" style="left:110.9px;top:981.5px;width:197.20px;height:21.90px;background:#FFFFFF;"></div>
<div class="b" style="left:309.7px;top:981.5px;width:301.50px;height:21.90px;background:#FFFFFF;"></div>
<div class="b" style="left:613px;top:981.5px;width:160.10px;height:21.90px;background:#FFFFFF;"></div>
<div class="b" style="left:774.8px;top:981.5px;width:118.40px;height:21.90px;background:#FFFFFF;"></div>
<div class="b" style="left:894.8px;top:981.5px;width:39.30px;height:21.90px;background:#FFFFFF;"></div>
<div class="b" style="left:935.7px;top:981.5px;width:105.50px;height:21.90px;background:#FFFFFF;"></div>
<div class="b" style="left:1042.9px;top:981.5px;width:39.10px;height:21.90px;background:#FFFFFF;"></div>
<div class="b" style="left:1083.8px;top:981.5px;width:56.00px;height:21.90px;background:#FFFFFF;"></div>
<div class="b" style="left:1141.6px;top:981.5px;width:40.40px;height:21.90px;background:#FFFFFF;"></div>
<div class="b" style="left:1184px;top:981.5px;width:65.10px;height:21.90px;background:#FFFFFF;"></div>
<div class="b" style="left:1250.8px;top:981.5px;width:92.20px;height:21.90px;background:#FFFFFF;"></div>
<div class="t " style="left:3.3px;top:985px;font-size:13.8px;line-height:16px;">33</div>
<svg class="b" style="left:44.8px;top:984.30px" width="8.5" height="13.3" viewBox="0 0 8.5 13.3" preserveAspectRatio="none"><rect x="3.40" y="4" width="1.7" height="9.30" fill="#84FF58"/><path d="M4.25 0 L8.5 5 L0 5 Z" fill="#66FF33"/></svg>
<div class="t " style="left:57.7px;top:986px;font-size:13.8px;line-height:16px;">(+8)</div>
<div class="t " style="left:112.5px;top:985px;font-size:13.8px;line-height:16px;">73</div>
<svg class="b" style="left:310.9px;top:988.20px" width="14.1" height="14.1" viewBox="0 0 14.1 14.1"><rect width="14.1" height="14.1" fill="#0000FF"/><rect x="1.1" y="1.1" width="11.9" height="11.9" fill="#0A1CFF"/><path d="M1.3 1.5 H12.8 V3.7 H8.7 V10.4 H12.8 V12.6 H1.3 V10.4 H5.4 V3.7 H1.3 Z" fill="#fff"/></svg>
<div class="t " style="left:336.3px;top:983px;font-size:13.8px;line-height:16px;">Alphons (Ubbergen)</div>
<div class="t " style="left:614.8px;top:985px;font-size:13.8px;line-height:16px;">Nederland</div>
<div class="t " style="left:775.9px;top:985px;font-size:13.8px;line-height:16px;">6.9</div>
<svg class="b" style="left:895.9px;top:985.10px" width="9.2" height="14.1" viewBox="0 0 9.2 14.1" preserveAspectRatio="none"><rect x="3.75" y="4" width="1.7" height="10.10" fill="#66FF33"/><path d="M4.6 0 L9.2 5 L0 5 Z" fill="#66FF33"/></svg>
<div class="t " style="left:937.1px;top:985px;font-size:13.8px;line-height:16px;">38</div>
<div class="t " style="left:1085.6px;top:985px;font-size:13.8px;line-height:16px;">155</div>
<svg class="b" style="left:1142.4px;top:985.30px" width="16" height="15" viewBox="0 0 16 15"><path d="M0.9 1.3 H10.6 Q14.1 1.3 14.1 4.7 V6.8 Q14.1 10.2 10.6 10.2 H4.5" fill="none" stroke="#000" stroke-width="1.25"/><path d="M0.5 10.2 L5.5 5.8 V14.7 Z" fill="#000"/></svg>
<div class="t " style="left:1184.9px;top:985px;font-size:13.8px;line-height:16px;">193.8</div>
<div class="b" style="left:2px;top:1005.0999999999999px;width:39.30px;height:21.26px;background:#FFFFFF;"></div>
<div class="b" style="left:42.9px;top:1005.0999999999999px;width:66.30px;height:21.26px;background:#FFFFFF;"></div>
<div class="b" style="left:110.9px;top:1005.0999999999999px;width:197.20px;height:21.26px;background:#FFFFFF;"></div>
<div class="b" style="left:309.7px;top:1005.0999999999999px;width:301.50px;height:21.26px;background:#FFFFFF;"></div>
<div class="b" style="left:613px;top:1005.0999999999999px;width:160.10px;height:21.26px;background:#FFFFFF;"></div>
<div class="b" style="left:774.8px;top:1005.0999999999999px;width:118.40px;height:21.26px;background:#FFFFFF;"></div>
<div class="b" style="left:894.8px;top:1005.0999999999999px;width:39.30px;height:21.26px;background:#FFFFFF;"></div>
<div class="b" style="left:935.7px;top:1005.0999999999999px;width:105.50px;height:21.26px;background:#FFFFFF;"></div>
<div class="b" style="left:1042.9px;top:1005.0999999999999px;width:39.10px;height:21.26px;background:#FFFFFF;"></div>
<div class="b" style="left:1083.8px;top:1005.0999999999999px;width:56.00px;height:21.26px;background:#FFFFFF;"></div>
<div class="b" style="left:1141.6px;top:1005.0999999999999px;width:40.40px;height:21.26px;background:#FFFFFF;"></div>
<div class="b" style="left:1184px;top:1005.0999999999999px;width:65.10px;height:21.26px;background:#FFFFFF;"></div>
<div class="b" style="left:1250.8px;top:1005.0999999999999px;width:92.20px;height:21.26px;background:#FFFFFF;"></div>
<div class="t " style="left:3.3px;top:1009px;font-size:13.8px;line-height:16px;">34</div>
<svg class="b" style="left:44.8px;top:1007.60px" width="8.5" height="14.0" viewBox="0 0 8.5 14.0" preserveAspectRatio="none"><rect x="3.45" y="0" width="1.6" height="10.00" fill="#FF8470"/><path d="M4.25 14.0 L8.5 9.0 L0 9.0 Z" fill="#F03A1C"/></svg>
<div class="t " style="left:57.7px;top:1010px;font-size:13.8px;line-height:16px;">(-6)</div>
<div class="t " style="left:112.5px;top:1009px;font-size:13.8px;line-height:16px;">146</div>
<svg class="b" style="left:310.9px;top:1011.80px" width="14.1" height="14.1" viewBox="0 0 14.1 14.1"><rect width="14.1" height="14.1" fill="#0000FF"/><rect x="1.1" y="1.1" width="11.9" height="11.9" fill="#0A1CFF"/><path d="M1.3 1.5 H12.8 V3.7 H8.7 V10.4 H12.8 V12.6 H1.3 V10.4 H5.4 V3.7 H1.3 Z" fill="#fff"/></svg>
<div class="t " style="left:336.3px;top:1007px;font-size:13.8px;line-height:16px;">Jos (Boekend, N-Limburg)</div>
<div class="t " style="left:614.8px;top:1009px;font-size:13.8px;line-height:16px;">Nederland</div>
<div class="t " style="left:775.9px;top:1009px;font-size:13.8px;line-height:16px;">8.0</div>
<svg class="b" style="left:895.9px;top:1009.20px" width="9.2" height="13.5" viewBox="0 0 9.2 13.5" preserveAspectRatio="none"><rect x="3.80" y="0" width="1.6" height="9.50" fill="#F03A1C"/><path d="M4.6 13.5 L9.2 8.5 L0 8.5 Z" fill="#F03A1C"/></svg>
<div class="t " style="left:937.1px;top:1009px;font-size:13.8px;line-height:16px;">45</div>
<div class="t " style="left:1085.6px;top:1009px;font-size:13.8px;line-height:16px;">185</div>
<svg class="b" style="left:1142.4px;top:1008.90px" width="16" height="15" viewBox="0 0 16 15"><path d="M0.9 1.3 H10.6 Q14.1 1.3 14.1 4.7 V6.8 Q14.1 10.2 10.6 10.2 H4.5" fill="none" stroke="#000" stroke-width="1.25"/><path d="M0.5 10.2 L5.5 5.8 V14.7 Z" fill="#000"/></svg>
<div class="t " style="left:1184.9px;top:1009px;font-size:13.8px;line-height:16px;">192.9</div>
<div class="b" style="left:2px;top:1028.06px;width:39.30px;height:23.94px;background:#FFFFFF;"></div>
<div class="b" style="left:42.9px;top:1028.06px;width:66.30px;height:23.94px;background:#FFFFFF;"></div>
<div class="b" style="left:110.9px;top:1028.06px;width:197.20px;height:23.94px;background:#FFFFFF;"></div>
<div class="b" style="left:309.7px;top:1028.06px;width:301.50px;height:23.94px;background:#FFFFFF;"></div>
<div class="b" style="left:613px;top:1028.06px;width:160.10px;height:23.94px;background:#FFFFFF;"></div>
<div class="b" style="left:774.8px;top:1028.06px;width:118.40px;height:23.94px;background:#FFFFFF;"></div>
<div class="b" style="left:894.8px;top:1028.06px;width:39.30px;height:23.94px;background:#FFFFFF;"></div>
<div class="b" style="left:935.7px;top:1028.06px;width:105.50px;height:23.94px;background:#FFFFFF;"></div>
<div class="b" style="left:1042.9px;top:1028.06px;width:39.10px;height:23.94px;background:#FFFFFF;"></div>
<div class="b" style="left:1083.8px;top:1028.06px;width:56.00px;height:23.94px;background:#FFFFFF;"></div>
<div class="b" style="left:1141.6px;top:1028.06px;width:40.40px;height:23.94px;background:#FFFFFF;"></div>
<div class="b" style="left:1184px;top:1028.06px;width:65.10px;height:23.94px;background:#FFFFFF;"></div>
<div class="b" style="left:1250.8px;top:1028.06px;width:92.20px;height:23.94px;background:#FFFFFF;"></div>
<div class="t rb" style="left:3.3px;top:1032px;font-size:13.8px;line-height:16px;">35</div>
<svg class="b" style="left:44.8px;top:1030.86px" width="8.5" height="13.3" viewBox="0 0 8.5 13.3" preserveAspectRatio="none"><rect x="3.40" y="4" width="1.7" height="9.30" fill="#84FF58"/><path d="M4.25 0 L8.5 5 L0 5 Z" fill="#66FF33"/></svg>
<div class="t rb" style="left:57.7px;top:1033px;font-size:13.8px;line-height:16px;">(+8)</div>
<div class="t rb" style="left:112.5px;top:1032px;font-size:13.8px;line-height:16px;">153</div>
<svg class="b" style="left:310.9px;top:1034.76px" width="14.1" height="14.1" viewBox="0 0 14.1 14.1"><rect width="14.1" height="14.1" fill="#0000FF"/><rect x="1.1" y="1.1" width="11.9" height="11.9" fill="#0A1CFF"/><path d="M1.3 1.5 H12.8 V3.7 H8.7 V10.4 H12.8 V12.6 H1.3 V10.4 H5.4 V3.7 H1.3 Z" fill="#fff"/></svg>
<div class="t rb" style="left:336.3px;top:1030px;font-size:13.8px;line-height:16px;">PERSISTENTIE</div>
<div class="t rb" style="left:614.8px;top:1032px;font-size:13.8px;line-height:16px;">Anders</div>
<div class="t rb" style="left:775.9px;top:1032px;font-size:13.8px;line-height:16px;">6.5</div>
<svg class="b" style="left:895.9px;top:1031.66px" width="9.2" height="14.1" viewBox="0 0 9.2 14.1" preserveAspectRatio="none"><rect x="3.75" y="4" width="1.7" height="10.10" fill="#66FF33"/><path d="M4.6 0 L9.2 5 L0 5 Z" fill="#66FF33"/></svg>
<div class="t rb" style="left:937.1px;top:1032px;font-size:13.8px;line-height:16px;">32</div>
<div class="t rb" style="left:1085.6px;top:1032px;font-size:13.8px;line-height:16px;">159</div>
<svg class="b" style="left:1142.4px;top:1031.86px" width="16" height="15" viewBox="0 0 16 15"><path d="M0.9 1.3 H10.6 Q14.1 1.3 14.1 4.7 V6.8 Q14.1 10.2 10.6 10.2 H4.5" fill="none" stroke="#000" stroke-width="1.25"/><path d="M0.5 10.2 L5.5 5.8 V14.7 Z" fill="#000"/></svg>
<div class="t rb" style="left:1184.9px;top:1032px;font-size:13.8px;line-height:16px;">192.6</div>
</body></html>
